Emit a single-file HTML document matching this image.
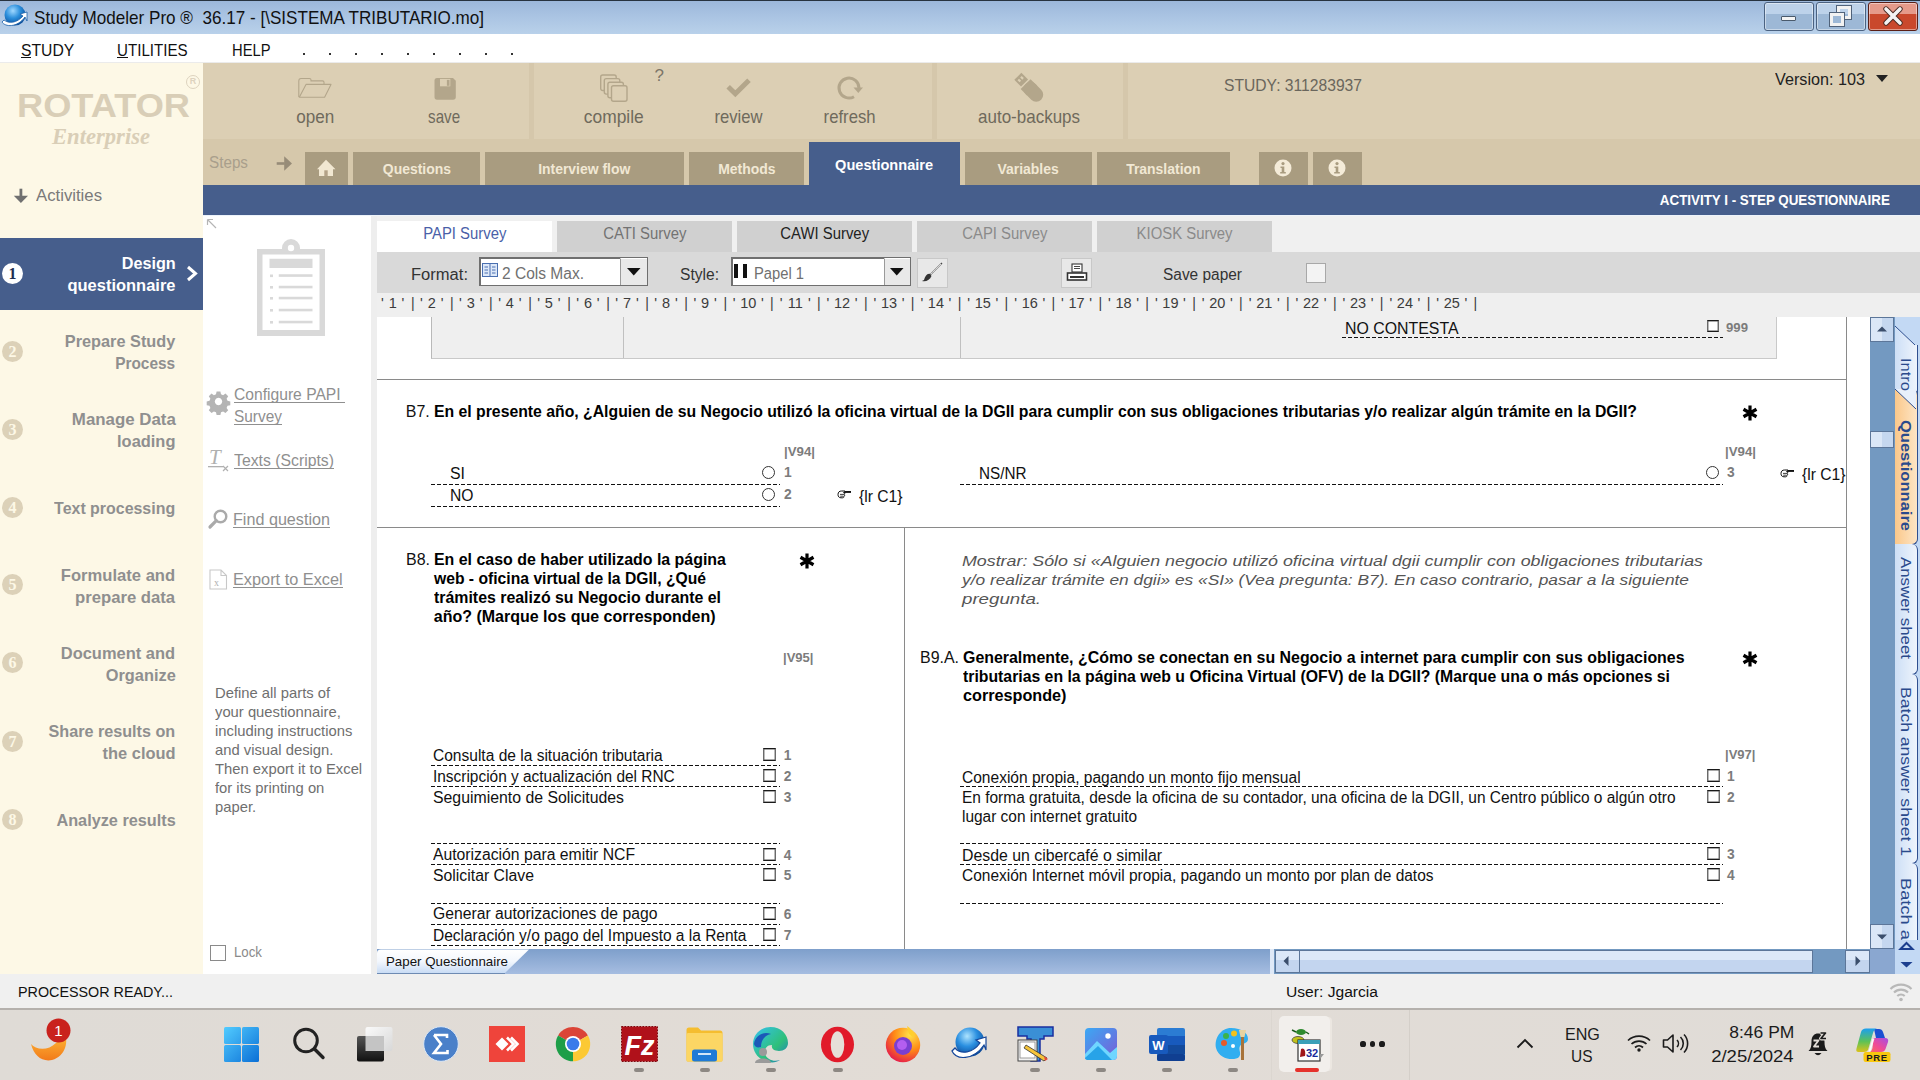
<!DOCTYPE html>
<html><head><meta charset="utf-8"><title>Study Modeler Pro</title><style>
*{margin:0;padding:0;box-sizing:border-box}
html,body{width:1920px;height:1080px;overflow:hidden;background:#f0f0f0;font-family:"Liberation Sans",sans-serif;position:relative}
.a{position:absolute}
.t{position:absolute;white-space:pre;display:block}
svg{position:absolute;overflow:visible}
</style></head><body>
<div class="a " style="left:0px;top:0px;width:1920px;height:34px;background:linear-gradient(#9bb6d9 0%,#a9c3e2 45%,#b9d1ea 100%);"></div>
<div class="a " style="left:0px;top:0px;width:1920px;height:1px;background:#27323e;"></div>
<svg style="left:1px;top:4px" width="27" height="24" viewBox="0 0 27 24">
<defs><radialGradient id="gl" cx="0.4" cy="0.3" r="0.7"><stop offset="0" stop-color="#9fd8ff"/><stop offset="0.5" stop-color="#2b8fdc"/><stop offset="1" stop-color="#0b4f9a"/></radialGradient></defs>
<circle cx="14" cy="11" r="10.5" fill="url(#gl)"/>
<path d="M1 18 C4 23 16 24 24 13 L26 17 L26 8 L19 10 L22 12 C16 19 8 20 3 16 Z" fill="#fff" stroke="#1b5fa8" stroke-width="0.8"/>
</svg>
<span class="t " style="left:34.00px;top:-2px;font-size:18.5px;line-height:40px;color:#111;font-family:'Liberation Sans',sans-serif;transform:scaleX(0.9242);transform-origin:left top;">Study Modeler Pro ®  36.17 - [\SISTEMA TRIBUTARIO.mo]</span>
<div class="a" style="left:1764px;top:2px;width:50px;height:29px;border:1px solid #4b6281;border-radius:3px;background:linear-gradient(#bdd2ea 0%,#bdd2ea 40%,#9db8d6 41%,#9db8d6 100%);box-shadow:inset 0 0 0 1px rgba(255,255,255,.45)"></div>
<div class="a" style="left:1816px;top:2px;width:50px;height:29px;border:1px solid #4b6281;border-radius:3px;background:linear-gradient(#bdd2ea 0%,#bdd2ea 40%,#9db8d6 41%,#9db8d6 100%);box-shadow:inset 0 0 0 1px rgba(255,255,255,.45)"></div>
<div class="a" style="left:1868px;top:2px;width:50px;height:29px;border:1px solid #5a1f16;border-radius:3px;background:linear-gradient(#e59a8a 0%,#e59a8a 40%,#c9482c 41%,#c9482c 100%);box-shadow:inset 0 0 0 1px rgba(255,255,255,.45)"></div>
<div class="a " style="left:1781px;top:16px;width:15px;height:5px;background:#f4f4f4;border:1px solid #4a5a6c;border-radius:1px"></div>
<div class="a" style="left:1837px;top:6px;width:14px;height:13px;border:3px solid #f2f2f2;outline:1px solid #50627a"></div>
<div class="a" style="left:1830px;top:13px;width:14px;height:13px;border:3px solid #f2f2f2;outline:1px solid #50627a;background:#9db8d6"></div>
<svg style="left:1884px;top:8px" width="18" height="16" viewBox="0 0 18 16"><path d="M2 1 L16 15 M16 1 L2 15" stroke="#4a2a22" stroke-width="5.4" stroke-linecap="round"/><path d="M2 1 L16 15 M16 1 L2 15" stroke="#f3f3f3" stroke-width="3.6" stroke-linecap="round"/></svg>
<div class="a " style="left:0px;top:34px;width:1920px;height:29px;background:#fff;"></div>
<div class="a " style="left:0px;top:62px;width:1920px;height:1px;background:#ebebeb;"></div>
<span class="t " style="left:21.00px;top:31px;font-size:16.6px;line-height:40px;color:#111;font-family:'Liberation Sans',sans-serif;transform:scaleX(0.9473);transform-origin:left top;">STUDY</span>
<div class="a " style="left:21px;top:57px;width:10px;height:1px;background:#111;"></div>
<span class="t " style="left:117.40px;top:31px;font-size:16.6px;line-height:40px;color:#111;font-family:'Liberation Sans',sans-serif;transform:scaleX(0.9125);transform-origin:left top;">UTILITIES</span>
<div class="a " style="left:117px;top:57px;width:11px;height:1px;background:#111;"></div>
<span class="t " style="left:231.90px;top:31px;font-size:16.6px;line-height:40px;color:#111;font-family:'Liberation Sans',sans-serif;transform:scaleX(0.8901);transform-origin:left top;">HELP</span>
<div class="a " style="left:303px;top:53px;width:2px;height:2px;background:#333;"></div>
<div class="a " style="left:329px;top:53px;width:2px;height:2px;background:#333;"></div>
<div class="a " style="left:355px;top:53px;width:2px;height:2px;background:#333;"></div>
<div class="a " style="left:381px;top:53px;width:2px;height:2px;background:#333;"></div>
<div class="a " style="left:407px;top:53px;width:2px;height:2px;background:#333;"></div>
<div class="a " style="left:433px;top:53px;width:2px;height:2px;background:#333;"></div>
<div class="a " style="left:459px;top:53px;width:2px;height:2px;background:#333;"></div>
<div class="a " style="left:485px;top:53px;width:2px;height:2px;background:#333;"></div>
<div class="a " style="left:511px;top:53px;width:2px;height:2px;background:#333;"></div>
<div class="a " style="left:0px;top:63px;width:203px;height:911px;background:#fdf8e6;"></div>
<span class="t " style="left:17.00px;top:84px;font-size:33px;line-height:43px;color:#d9ceb7;font-family:'Liberation Sans',sans-serif;font-weight:bold;transform:scaleX(1.0973);transform-origin:left top;">ROTATOR</span>
<div class="a" style="left:186px;top:75px;width:14px;height:14px;border:1.5px solid #ddd3bf;border-radius:50%;color:#ddd3bf;font:bold 9px/11px 'Liberation Sans';text-align:center">R</div>
<span class="t " style="left:52.00px;top:117px;font-size:23px;line-height:40px;color:#d9ceb7;font-family:'Liberation Serif',serif;font-weight:bold;font-style:italic;transform:scaleX(0.9831);transform-origin:left top;">Enterprise</span>
<svg style="left:13px;top:188px" width="16" height="16" viewBox="0 0 16 16"><rect x="6.5" y="0.7" width="2.8" height="9" fill="#707070"/><path d="M0.8 7.8 H15 L7.9 15 Z" fill="#707070"/></svg>
<span class="t " style="left:36.00px;top:176px;font-size:17px;line-height:40px;color:#7a7a7a;font-family:'Liberation Sans',sans-serif;transform:scaleX(0.9840);transform-origin:left top;">Activities</span>
<div class="a " style="left:0px;top:238px;width:203px;height:72px;background:#465e8c;"></div>
<span class="t " style="left:118.82px;top:244px;font-size:17px;line-height:40px;color:#fff;font-family:'Liberation Sans',sans-serif;font-weight:bold;transform:scaleX(0.9527);transform-origin:right top;">Design</span>
<span class="t " style="left:64.03px;top:266px;font-size:17px;line-height:40px;color:#fff;font-family:'Liberation Sans',sans-serif;font-weight:bold;transform:scaleX(0.9689);transform-origin:right top;">questionnaire</span>
<div class="a" style="left:2px;top:262.5px;width:21px;height:21px;border-radius:50%;background:#fff"></div>
<span class="t " style="left:8.50px;top:254px;font-size:16px;line-height:40px;color:#1f2d50;font-family:'Liberation Serif',serif;font-weight:bold;">1</span>
<span class="t " style="left:60.23px;top:322px;font-size:17px;line-height:40px;color:#8f8f8f;font-family:'Liberation Sans',sans-serif;font-weight:bold;transform:scaleX(0.9578);transform-origin:right top;">Prepare Study</span>
<span class="t " style="left:109.34px;top:344px;font-size:17px;line-height:40px;color:#8f8f8f;font-family:'Liberation Sans',sans-serif;font-weight:bold;transform:scaleX(0.9069);transform-origin:right top;">Process</span>
<div class="a" style="left:2px;top:340.5px;width:21px;height:21px;border-radius:50%;background:#dcd1b8"></div>
<span class="t " style="left:8.50px;top:332px;font-size:16px;line-height:40px;color:#fdf8e6;font-family:'Liberation Serif',serif;font-weight:bold;">2</span>
<span class="t " style="left:70.63px;top:400px;font-size:17px;line-height:40px;color:#8f8f8f;font-family:'Liberation Sans',sans-serif;font-weight:bold;transform:scaleX(0.9917);transform-origin:right top;">Manage Data</span>
<span class="t " style="left:115.06px;top:422px;font-size:17px;line-height:40px;color:#8f8f8f;font-family:'Liberation Sans',sans-serif;font-weight:bold;transform:scaleX(0.9663);transform-origin:right top;">loading</span>
<div class="a" style="left:2px;top:418.5px;width:21px;height:21px;border-radius:50%;background:#dcd1b8"></div>
<span class="t " style="left:8.50px;top:410px;font-size:16px;line-height:40px;color:#fdf8e6;font-family:'Liberation Serif',serif;font-weight:bold;">3</span>
<span class="t " style="left:46.39px;top:489px;font-size:17px;line-height:40px;color:#8f8f8f;font-family:'Liberation Sans',sans-serif;font-weight:bold;transform:scaleX(0.9372);transform-origin:right top;">Text processing</span>
<div class="a" style="left:2px;top:496.5px;width:21px;height:21px;border-radius:50%;background:#dcd1b8"></div>
<span class="t " style="left:8.50px;top:488px;font-size:16px;line-height:40px;color:#fdf8e6;font-family:'Liberation Serif',serif;font-weight:bold;">4</span>
<span class="t " style="left:58.37px;top:556px;font-size:17px;line-height:40px;color:#8f8f8f;font-family:'Liberation Sans',sans-serif;font-weight:bold;transform:scaleX(0.9759);transform-origin:right top;">Formulate and</span>
<span class="t " style="left:73.46px;top:578px;font-size:17px;line-height:40px;color:#8f8f8f;font-family:'Liberation Sans',sans-serif;font-weight:bold;transform:scaleX(0.9800);transform-origin:right top;">prepare data</span>
<div class="a" style="left:2px;top:573.5px;width:21px;height:21px;border-radius:50%;background:#dcd1b8"></div>
<span class="t " style="left:8.50px;top:565px;font-size:16px;line-height:40px;color:#fdf8e6;font-family:'Liberation Serif',serif;font-weight:bold;">5</span>
<span class="t " style="left:57.44px;top:634px;font-size:17px;line-height:40px;color:#8f8f8f;font-family:'Liberation Sans',sans-serif;font-weight:bold;transform:scaleX(0.9681);transform-origin:right top;">Document and</span>
<span class="t " style="left:102.76px;top:656px;font-size:17px;line-height:40px;color:#8f8f8f;font-family:'Liberation Sans',sans-serif;font-weight:bold;transform:scaleX(0.9623);transform-origin:right top;">Organize</span>
<div class="a" style="left:2px;top:651.5px;width:21px;height:21px;border-radius:50%;background:#dcd1b8"></div>
<span class="t " style="left:8.50px;top:643px;font-size:16px;line-height:40px;color:#fdf8e6;font-family:'Liberation Serif',serif;font-weight:bold;">6</span>
<span class="t " style="left:42.29px;top:712px;font-size:17px;line-height:40px;color:#8f8f8f;font-family:'Liberation Sans',sans-serif;font-weight:bold;transform:scaleX(0.9511);transform-origin:right top;">Share results on</span>
<span class="t " style="left:99.94px;top:734px;font-size:17px;line-height:40px;color:#8f8f8f;font-family:'Liberation Sans',sans-serif;font-weight:bold;transform:scaleX(0.9662);transform-origin:right top;">the cloud</span>
<div class="a" style="left:2px;top:730.5px;width:21px;height:21px;border-radius:50%;background:#dcd1b8"></div>
<span class="t " style="left:8.50px;top:722px;font-size:16px;line-height:40px;color:#fdf8e6;font-family:'Liberation Serif',serif;font-weight:bold;">7</span>
<span class="t " style="left:50.78px;top:801px;font-size:17px;line-height:40px;color:#8f8f8f;font-family:'Liberation Sans',sans-serif;font-weight:bold;transform:scaleX(0.9565);transform-origin:right top;">Analyze results</span>
<div class="a" style="left:2px;top:808.5px;width:21px;height:21px;border-radius:50%;background:#dcd1b8"></div>
<span class="t " style="left:8.50px;top:800px;font-size:16px;line-height:40px;color:#fdf8e6;font-family:'Liberation Serif',serif;font-weight:bold;">8</span>
<svg style="left:186px;top:265px" width="12" height="17" viewBox="0 0 12 17"><path d="M2 2 L9.5 8.5 L2 15" stroke="#fff" stroke-width="3" fill="none"/></svg>
<div class="a " style="left:203px;top:63px;width:1717px;height:76px;background:#dccfb4;"></div>
<div class="a " style="left:529px;top:63px;width:5px;height:76px;background:#d5c7ab;"></div>
<div class="a " style="left:932px;top:63px;width:5px;height:76px;background:#d5c7ab;"></div>
<div class="a " style="left:1123px;top:63px;width:5px;height:76px;background:#d5c7ab;"></div>
<div class="a " style="left:203px;top:139px;width:1717px;height:46px;background:#d6c8ab;"></div>
<span class="t " style="left:293.87px;top:97px;font-size:19px;line-height:40px;color:#6f6a5c;font-family:'Liberation Sans',sans-serif;transform:scaleX(0.8990);transform-origin:center top;">open</span>
<span class="t " style="left:423.93px;top:97px;font-size:19px;line-height:40px;color:#6f6a5c;font-family:'Liberation Sans',sans-serif;transform:scaleX(0.7973);transform-origin:center top;">save</span>
<span class="t " style="left:581.26px;top:97px;font-size:19px;line-height:40px;color:#6f6a5c;font-family:'Liberation Sans',sans-serif;transform:scaleX(0.9164);transform-origin:center top;">compile</span>
<span class="t " style="left:710.55px;top:97px;font-size:19px;line-height:40px;color:#6f6a5c;font-family:'Liberation Sans',sans-serif;transform:scaleX(0.8742);transform-origin:center top;">review</span>
<span class="t " style="left:820.43px;top:97px;font-size:19px;line-height:40px;color:#6f6a5c;font-family:'Liberation Sans',sans-serif;transform:scaleX(0.8793);transform-origin:center top;">refresh</span>
<span class="t " style="left:971.96px;top:97px;font-size:19px;line-height:40px;color:#6f6a5c;font-family:'Liberation Sans',sans-serif;transform:scaleX(0.8941);transform-origin:center top;">auto-backups</span>
<span class="t " style="left:1224.00px;top:66px;font-size:17px;line-height:40px;color:#6a665c;font-family:'Liberation Sans',sans-serif;transform:scaleX(0.9203);transform-origin:left top;">STUDY: 311283937</span>
<span class="t " style="left:1775.00px;top:60px;font-size:17px;line-height:40px;color:#222;font-family:'Liberation Sans',sans-serif;transform:scaleX(0.9522);transform-origin:left top;">Version: 103</span>
<svg style="left:1876px;top:75px" width="13" height="8" viewBox="0 0 13 8"><path d="M0 0 H12 L6 7 Z" fill="#222"/></svg>
<svg style="left:297px;top:77px" width="36" height="22" viewBox="0 0 36 22"><path d="M1.8 20 V4 Q1.8 1.5 4 1.5 H12.5 Q14 1.5 14 3 V3.9 H25.5 Q27 3.9 27 5.2 V7" fill="none" stroke="#b3a68b" stroke-width="1.1"/><path d="M2.3 20.3 L9 7.4 H34 L27.6 20.3 Z" fill="none" stroke="#b3a68b" stroke-width="1.1" stroke-linejoin="round"/></svg>
<svg style="left:434px;top:77px" width="23" height="24" viewBox="0 0 23 24"><path d="M3 1 H19 L21.8 3.8 V20 Q21.8 22.8 19 22.8 H3 Q0.5 22.8 0.5 20 V3.5 Q0.5 1 3 1 Z" fill="#b3a68b"/><rect x="6" y="1.9" width="10.3" height="7.4" fill="#dccfb4"/><rect x="12.9" y="2.9" width="2.6" height="5.9" fill="#b3a68b"/></svg>
<svg style="left:599px;top:73px" width="31" height="31" viewBox="0 0 31 31"><rect x="1.7" y="2" width="15.5" height="15.5" rx="2" fill="#dccfb4" stroke="#b3a68b" stroke-width="1.4"/><rect x="5.3" y="5.6" width="15.5" height="15.5" rx="2" fill="#dccfb4" stroke="#b3a68b" stroke-width="1.4"/><rect x="8.9" y="9.2" width="15.5" height="15.5" rx="2" fill="#dccfb4" stroke="#b3a68b" stroke-width="1.4"/><rect x="12.5" y="12.8" width="15.5" height="15.5" rx="2" fill="#dccfb4" stroke="#b3a68b" stroke-width="1.4"/></svg>
<span class="t " style="left:654.57px;top:56px;font-size:17px;line-height:40px;color:#7c7668;font-family:'Liberation Sans',sans-serif;">?</span>
<svg style="left:726px;top:77px" width="27" height="21" viewBox="0 0 27 21"><path d="M2.2 9.8 L9.3 16.8 L23 3.2" fill="none" stroke="#b3a68b" stroke-width="5"/></svg>
<svg style="left:837px;top:75px" width="28" height="26" viewBox="0 0 28 26"><path d="M17 21.7 A10 10 0 1 1 22 13" fill="none" stroke="#b3a68b" stroke-width="3"/><path d="M16.5 12.5 H26 L21.3 18 Z" fill="#b3a68b"/></svg>
<svg style="left:1010px;top:70px" width="40" height="40" viewBox="0 0 40 40"><g transform="translate(19.5 18) rotate(-45) translate(-7 -16.5)"><rect x="0" y="11" width="14" height="22" rx="7" fill="#b3a68b"/><rect x="0" y="11" width="14" height="9" fill="#b3a68b"/><rect x="2" y="0" width="10" height="9.5" fill="#b3a68b"/><rect x="4" y="2.5" width="2.2" height="3" fill="#dccfb4"/><rect x="7.8" y="2.5" width="2.2" height="3" fill="#dccfb4"/></g></svg>
<span class="t " style="left:209.00px;top:143px;font-size:16px;line-height:40px;color:#a99f8c;font-family:'Liberation Sans',sans-serif;transform:scaleX(0.9532);transform-origin:left top;">Steps</span>
<svg style="left:276px;top:155px" width="17" height="17" viewBox="0 0 17 17"><rect x="0.7" y="7.2" width="8" height="2.6" fill="#978c78"/><path d="M8.2 1.2 L16 8.5 L8.2 15.8 Z" fill="#978c78"/></svg>
<div class="a " style="left:305px;top:152px;width:43px;height:33px;background:#a99c80;"></div>
<div class="a " style="left:353px;top:152px;width:127px;height:33px;background:#a99c80;"></div>
<span class="t " style="left:378.60px;top:149px;font-size:15.5px;line-height:40px;color:#f1e8d4;font-family:'Liberation Sans',sans-serif;font-weight:bold;transform:scaleX(0.9000);transform-origin:center top;">Questions</span>
<div class="a " style="left:485px;top:152px;width:199px;height:33px;background:#a99c80;"></div>
<span class="t " style="left:533.25px;top:149px;font-size:15.5px;line-height:40px;color:#f1e8d4;font-family:'Liberation Sans',sans-serif;font-weight:bold;transform:scaleX(0.9000);transform-origin:center top;">Interview flow</span>
<div class="a " style="left:689px;top:152px;width:115px;height:33px;background:#a99c80;"></div>
<span class="t " style="left:714.64px;top:149px;font-size:15.5px;line-height:40px;color:#f1e8d4;font-family:'Liberation Sans',sans-serif;font-weight:bold;transform:scaleX(0.9000);transform-origin:center top;">Methods</span>
<div class="a " style="left:965px;top:152px;width:127px;height:33px;background:#a99c80;"></div>
<span class="t " style="left:994.46px;top:149px;font-size:15.5px;line-height:40px;color:#f1e8d4;font-family:'Liberation Sans',sans-serif;font-weight:bold;transform:scaleX(0.9000);transform-origin:center top;">Variables</span>
<div class="a " style="left:1097px;top:152px;width:133px;height:33px;background:#a99c80;"></div>
<span class="t " style="left:1122.16px;top:149px;font-size:15.5px;line-height:40px;color:#f1e8d4;font-family:'Liberation Sans',sans-serif;font-weight:bold;transform:scaleX(0.9000);transform-origin:center top;">Translation</span>
<div class="a " style="left:1259px;top:152px;width:49px;height:33px;background:#a99c80;"></div>
<div class="a " style="left:1313px;top:152px;width:49px;height:33px;background:#a99c80;"></div>
<svg style="left:316px;top:159px" width="21" height="18" viewBox="0 0 21 18"><path d="M1 10.2 L10 0.8 L19.5 10.2 H17 V17 H3 V10.2 Z" fill="#f1e7d1"/><rect x="8.3" y="11.3" width="3.4" height="5.7" fill="#b3a187"/></svg>
<svg style="left:1274px;top:159px" width="18" height="18" viewBox="0 0 18 18"><circle cx="9" cy="9" r="8.5" fill="#f4ebd8"/><circle cx="9" cy="4.6" r="1.6" fill="#a99c80"/><path d="M6.5 7.5 H10.3 V13 H11.8 V14.6 H6.2 V13 H7.7 V9 H6.5 Z" fill="#a99c80"/></svg>
<svg style="left:1328px;top:159px" width="18" height="18" viewBox="0 0 18 18"><circle cx="9" cy="9" r="8.5" fill="#f4ebd8"/><circle cx="9" cy="4.6" r="1.6" fill="#a99c80"/><path d="M6.5 7.5 H10.3 V13 H11.8 V14.6 H6.2 V13 H7.7 V9 H6.5 Z" fill="#a99c80"/></svg>
<div class="a " style="left:809px;top:142px;width:151px;height:43px;background:#465e8c;"></div>
<span class="t " style="left:832.39px;top:145px;font-size:15.5px;line-height:40px;color:#fff;font-family:'Liberation Sans',sans-serif;font-weight:bold;transform:scaleX(0.9403);transform-origin:center top;">Questionnaire</span>
<div class="a " style="left:203px;top:185px;width:1717px;height:30px;background:#465e8c;"></div>
<span class="t " style="left:1632.18px;top:180px;font-size:15px;line-height:40px;color:#fff;font-family:'Liberation Sans',sans-serif;font-weight:bold;transform:scaleX(0.8921);transform-origin:right top;">ACTIVITY I - STEP QUESTIONNAIRE</span>
<div class="a " style="left:203px;top:215px;width:169px;height:759px;background:#fff;"></div>
<svg style="left:206px;top:218px" width="12" height="12" viewBox="0 0 12 12"><path d="M1.5 1.5 L10 10 M1.5 1.5 H7 M1.5 1.5 V7" stroke="#b5b5b5" stroke-width="1.2" fill="none"/></svg>
<svg style="left:257px;top:240px" width="69" height="96" viewBox="0 0 69 96">
<path d="M0 9 H25 V8 A9 9 0 0 1 43 8 V9 H68 V96 H0 Z M5.5 14.5 V90 H62.5 V14.5 Z" fill="#d9d9d9" fill-rule="evenodd"/>
<rect x="12.5" y="18.75" width="43" height="9.25" fill="#d9d9d9"/>
<circle cx="34" cy="8" r="3.2" fill="#fff"/>
<rect x="13" y="34.5" width="3" height="2.6" fill="#d9d9d9"/><rect x="21.75" y="34.25" width="33.75" height="2.6" fill="#d9d9d9"/><rect x="13" y="46" width="3" height="2.6" fill="#d9d9d9"/><rect x="21.75" y="45.75" width="33.75" height="2.6" fill="#d9d9d9"/><rect x="13" y="57" width="3" height="2.6" fill="#d9d9d9"/><rect x="21.75" y="56.75" width="33.75" height="2.6" fill="#d9d9d9"/><rect x="13" y="69" width="3" height="2.6" fill="#d9d9d9"/><rect x="21.75" y="68.75" width="33.75" height="2.6" fill="#d9d9d9"/><rect x="13" y="81" width="3" height="2.6" fill="#d9d9d9"/><rect x="21.75" y="80.75" width="33.75" height="2.6" fill="#d9d9d9"/></svg>
<svg style="left:208px;top:391px" width="21" height="21" viewBox="0 0 21 21"><path fill="#b4b4b4" fill-rule="evenodd" d="M8.6 0.5h3.8l0.6 2.8 2.1 0.9 2.4-1.6 2.7 2.7-1.6 2.4 0.9 2.1 2.8 0.6v3.8l-2.8 0.6-0.9 2.1 1.6 2.4-2.7 2.7-2.4-1.6-2.1 0.9-0.6 2.8h-3.8l-0.6-2.8-2.1-0.9-2.4 1.6-2.7-2.7 1.6-2.4-0.9-2.1-2.8-0.6v-3.8l2.8-0.6 0.9-2.1-1.6-2.4 2.7-2.7 2.4 1.6 2.1-0.9z M10.5 6.8a3.7 3.7 0 1 0 0.01 0z"/></svg>
<span class="t " style="left:233.75px;top:374px;font-size:16.4px;line-height:40px;color:#8f8f8f;font-family:'Liberation Sans',sans-serif;transform:scaleX(0.9538);transform-origin:left top;">Configure PAPI </span><div class="a " style="left:233.75px;top:402px;width:111px;height:1px;background:#8f8f8f;"></div>
<span class="t " style="left:233.75px;top:396px;font-size:16.4px;line-height:40px;color:#8f8f8f;font-family:'Liberation Sans',sans-serif;transform:scaleX(0.9404);transform-origin:left top;">Survey</span><div class="a " style="left:233.75px;top:424px;width:48px;height:1px;background:#8f8f8f;"></div>
<span class="t " style="left:233.75px;top:440px;font-size:16.4px;line-height:40px;color:#8f8f8f;font-family:'Liberation Sans',sans-serif;transform:scaleX(0.9627);transform-origin:left top;">Texts (Scripts)</span><div class="a " style="left:233.75px;top:467.75px;width:100px;height:1px;background:#8f8f8f;"></div>
<span class="t " style="left:233.00px;top:499px;font-size:16.4px;line-height:40px;color:#8f8f8f;font-family:'Liberation Sans',sans-serif;transform:scaleX(0.9851);transform-origin:left top;">Find question</span><div class="a " style="left:233px;top:527.1px;width:97px;height:1px;background:#8f8f8f;"></div>
<span class="t " style="left:233.00px;top:559px;font-size:16.4px;line-height:40px;color:#8f8f8f;font-family:'Liberation Sans',sans-serif;transform:scaleX(0.9946);transform-origin:left top;">Export to Excel</span><div class="a " style="left:233px;top:587.4px;width:109.7px;height:1px;background:#8f8f8f;"></div>
<svg style="left:208px;top:448px" width="22" height="24" viewBox="0 0 22 24"><text x="1" y="16" font-family="Liberation Serif" font-style="italic" font-size="21" fill="#b0b0b0">T</text><rect x="0" y="18" width="15" height="1.3" fill="#b0b0b0"/><path d="M15 18 L20 23 M20 18 L15 23" stroke="#b0b0b0" stroke-width="1.2"/></svg>
<svg style="left:208px;top:509px" width="21" height="20" viewBox="0 0 21 20"><circle cx="12.5" cy="7.5" r="5.8" fill="none" stroke="#aaa" stroke-width="2.4"/><path d="M8.3 11.7 L2 18" stroke="#aaa" stroke-width="3.2" stroke-linecap="round"/></svg>
<svg style="left:209px;top:569px" width="19" height="21" viewBox="0 0 19 21"><path d="M1 1 H12 L17.5 6.5 V20 H1 Z M12 1 V6.5 H17.5" fill="none" stroke="#c8c8c8" stroke-width="1.1"/><text x="5" y="17" font-family="Liberation Serif" font-size="10" fill="#b0b0b0">x</text></svg>
<span class="t " style="left:215.30px;top:673px;font-size:14.5px;line-height:40px;color:#6f6f6f;font-family:'Liberation Sans',sans-serif;transform:scaleX(1.0200);transform-origin:left top;">Define all parts of</span>
<span class="t " style="left:215.30px;top:692px;font-size:14.5px;line-height:40px;color:#6f6f6f;font-family:'Liberation Sans',sans-serif;transform:scaleX(1.0200);transform-origin:left top;">your questionnaire,</span>
<span class="t " style="left:215.30px;top:711px;font-size:14.5px;line-height:40px;color:#6f6f6f;font-family:'Liberation Sans',sans-serif;transform:scaleX(1.0200);transform-origin:left top;">including instructions</span>
<span class="t " style="left:215.30px;top:730px;font-size:14.5px;line-height:40px;color:#6f6f6f;font-family:'Liberation Sans',sans-serif;transform:scaleX(1.0200);transform-origin:left top;">and visual design.</span>
<span class="t " style="left:215.30px;top:749px;font-size:14.5px;line-height:40px;color:#6f6f6f;font-family:'Liberation Sans',sans-serif;transform:scaleX(1.0200);transform-origin:left top;">Then export it to Excel</span>
<span class="t " style="left:215.30px;top:768px;font-size:14.5px;line-height:40px;color:#6f6f6f;font-family:'Liberation Sans',sans-serif;transform:scaleX(1.0200);transform-origin:left top;">for its printing on</span>
<span class="t " style="left:215.30px;top:787px;font-size:14.5px;line-height:40px;color:#6f6f6f;font-family:'Liberation Sans',sans-serif;transform:scaleX(1.0200);transform-origin:left top;">paper.</span>
<div class="a " style="left:210px;top:945px;width:16px;height:16px;background:#fff;border:1px solid #8a8a8a"></div>
<span class="t " style="left:234.00px;top:932px;font-size:14.5px;line-height:40px;color:#8a8a8a;font-family:'Liberation Sans',sans-serif;transform:scaleX(0.9142);transform-origin:left top;">Lock</span>
<div class="a " style="left:371px;top:215px;width:1549px;height:759px;background:#f0f0f0;"></div>
<div class="a " style="left:371px;top:215px;width:6px;height:759px;background:#eeeeee;"></div>
<div class="a " style="left:203px;top:215px;width:1717px;height:1px;background:#edf3fb;"></div>
<div class="a " style="left:377px;top:221px;width:175px;height:31px;background:#fff;"></div>
<span class="t " style="left:419.74px;top:214px;font-size:16px;line-height:40px;color:#4a5fa8;font-family:'Liberation Sans',sans-serif;transform:scaleX(0.9300);transform-origin:center top;">PAPI Survey</span>
<div class="a " style="left:557px;top:221px;width:175px;height:31px;background:#d0d0d0;"></div>
<span class="t " style="left:599.75px;top:214px;font-size:16px;line-height:40px;color:#737373;font-family:'Liberation Sans',sans-serif;transform:scaleX(0.9300);transform-origin:center top;">CATI Survey</span>
<div class="a " style="left:737px;top:221px;width:175px;height:31px;background:#d0d0d0;"></div>
<span class="t " style="left:776.79px;top:214px;font-size:16px;line-height:40px;color:#222;font-family:'Liberation Sans',sans-serif;transform:scaleX(0.9300);transform-origin:center top;">CAWI Survey</span>
<div class="a " style="left:917px;top:221px;width:175px;height:31px;background:#d0d0d0;"></div>
<span class="t " style="left:958.71px;top:214px;font-size:16px;line-height:40px;color:#8a8a8a;font-family:'Liberation Sans',sans-serif;transform:scaleX(0.9300);transform-origin:center top;">CAPI Survey</span>
<div class="a " style="left:1097px;top:221px;width:175px;height:31px;background:#d0d0d0;"></div>
<span class="t " style="left:1132.92px;top:214px;font-size:16px;line-height:40px;color:#8a8a8a;font-family:'Liberation Sans',sans-serif;transform:scaleX(0.9300);transform-origin:center top;">KIOSK Survey</span>
<div class="a " style="left:377px;top:252px;width:1543px;height:41px;background:#d9d9d9;"></div>
<span class="t " style="left:410.50px;top:255px;font-size:16px;line-height:40px;color:#333;font-family:'Liberation Sans',sans-serif;transform:scaleX(1.0341);transform-origin:left top;">Format:</span>
<div class="a " style="left:479px;top:257px;width:169px;height:29px;background:#fff;border:2px solid #6f6f6f;border-right-width:1px;border-bottom-width:1px"></div>
<div class="a " style="left:620px;top:258px;width:27px;height:27px;background:#e9e9e9;border-left:1px solid #9a9a9a;border-top:1px solid #fff"></div>
<svg style="left:627px;top:268px" width="14" height="8" viewBox="0 0 14 8"><path d="M0 0 H13.5 L6.75 7.5 Z" fill="#111"/></svg>
<svg style="left:482px;top:263px" width="17" height="16" viewBox="0 0 17 16"><rect x="0.5" y="0.5" width="15" height="13" fill="#dde8f8" stroke="#4a6fb0"/><path d="M8 1 V13 M2.5 4 H6 M2.5 7 H6 M2.5 10 H6 M10 4 H13.5 M10 7 H13.5 M10 10 H13.5" stroke="#4a6fb0" stroke-width="1"/></svg>
<span class="t " style="left:502.00px;top:254px;font-size:16px;line-height:40px;color:#707070;font-family:'Liberation Sans',sans-serif;transform:scaleX(0.9708);transform-origin:left top;">2 Cols Max.</span>
<span class="t " style="left:680.00px;top:255px;font-size:16px;line-height:40px;color:#333;font-family:'Liberation Sans',sans-serif;transform:scaleX(0.9746);transform-origin:left top;">Style:</span>
<div class="a " style="left:731px;top:257px;width:180px;height:29px;background:#fff;border:2px solid #6f6f6f;border-right-width:1px;border-bottom-width:1px"></div>
<div class="a " style="left:884px;top:258px;width:26px;height:27px;background:#e9e9e9;border-left:1px solid #9a9a9a;border-top:1px solid #fff"></div>
<svg style="left:890px;top:268px" width="14" height="8" viewBox="0 0 14 8"><path d="M0 0 H13.5 L6.75 7.5 Z" fill="#111"/></svg>
<div class="a " style="left:734px;top:264px;width:4px;height:14px;background:#111;"></div>
<div class="a " style="left:743px;top:264px;width:4px;height:14px;background:#111;"></div>
<span class="t " style="left:754.00px;top:254px;font-size:16px;line-height:40px;color:#707070;font-family:'Liberation Sans',sans-serif;transform:scaleX(0.9214);transform-origin:left top;">Papel 1</span>
<div class="a " style="left:917px;top:258px;width:31px;height:30px;background:#e8e8e8;border:1px solid #c8c8c8"></div>
<svg style="left:920px;top:261px" width="24" height="24" viewBox="0 0 24 24"><path d="M22 2 L10 14" stroke="#444" stroke-width="1.2"/><path d="M21 3 C17 7 13 11 10.5 13.5" stroke="#fff" stroke-width="0.8"/><path d="M10 13 C7 12 5 16 4 19 L2 20 C6 21 10 19 11.5 15 Z" fill="#333"/></svg>
<div class="a " style="left:1061px;top:258px;width:31px;height:30px;background:#e8e8e8;border:1px solid #c8c8c8"></div>
<svg style="left:1066px;top:263px" width="22" height="21" viewBox="0 0 22 21"><rect x="6" y="1" width="10" height="8" fill="#fff" stroke="#333" stroke-width="1.1"/><path d="M8 3.5 H14 M8 5.5 H14" stroke="#333" stroke-width="0.9"/><rect x="1.5" y="10" width="19" height="7" fill="#fff" stroke="#333" stroke-width="1.6"/><rect x="4" y="13" width="14" height="2" fill="#333"/></svg>
<span class="t " style="left:1163.00px;top:255px;font-size:16px;line-height:40px;color:#333;font-family:'Liberation Sans',sans-serif;transform:scaleX(0.9653);transform-origin:left top;">Save paper</span>
<div class="a " style="left:1306px;top:263px;width:20px;height:20px;background:#f3f3f3;border:1px solid #a8a8a8"></div>
<div class="a " style="left:377px;top:293px;width:1543px;height:24px;background:#efefef;"></div>
<span class="t " style="left:388.67px;top:283px;font-size:14.5px;line-height:40px;color:#3c3c3c;font-family:'Liberation Sans',sans-serif;">1</span>
<span class="t " style="left:381.02px;top:283px;font-size:14.5px;line-height:40px;color:#3c3c3c;font-family:'Liberation Sans',sans-serif;">'</span>
<span class="t " style="left:401.62px;top:283px;font-size:14.5px;line-height:40px;color:#3c3c3c;font-family:'Liberation Sans',sans-serif;">'</span>
<span class="t " style="left:410.98px;top:283px;font-size:14px;line-height:40px;color:#3c3c3c;font-family:'Liberation Sans',sans-serif;">|</span>
<span class="t " style="left:427.72px;top:283px;font-size:14.5px;line-height:40px;color:#3c3c3c;font-family:'Liberation Sans',sans-serif;">2</span>
<span class="t " style="left:420.07px;top:283px;font-size:14.5px;line-height:40px;color:#3c3c3c;font-family:'Liberation Sans',sans-serif;">'</span>
<span class="t " style="left:440.67px;top:283px;font-size:14.5px;line-height:40px;color:#3c3c3c;font-family:'Liberation Sans',sans-serif;">'</span>
<span class="t " style="left:450.03px;top:283px;font-size:14px;line-height:40px;color:#3c3c3c;font-family:'Liberation Sans',sans-serif;">|</span>
<span class="t " style="left:466.77px;top:283px;font-size:14.5px;line-height:40px;color:#3c3c3c;font-family:'Liberation Sans',sans-serif;">3</span>
<span class="t " style="left:459.12px;top:283px;font-size:14.5px;line-height:40px;color:#3c3c3c;font-family:'Liberation Sans',sans-serif;">'</span>
<span class="t " style="left:479.72px;top:283px;font-size:14.5px;line-height:40px;color:#3c3c3c;font-family:'Liberation Sans',sans-serif;">'</span>
<span class="t " style="left:489.08px;top:283px;font-size:14px;line-height:40px;color:#3c3c3c;font-family:'Liberation Sans',sans-serif;">|</span>
<span class="t " style="left:505.82px;top:283px;font-size:14.5px;line-height:40px;color:#3c3c3c;font-family:'Liberation Sans',sans-serif;">4</span>
<span class="t " style="left:498.17px;top:283px;font-size:14.5px;line-height:40px;color:#3c3c3c;font-family:'Liberation Sans',sans-serif;">'</span>
<span class="t " style="left:518.77px;top:283px;font-size:14.5px;line-height:40px;color:#3c3c3c;font-family:'Liberation Sans',sans-serif;">'</span>
<span class="t " style="left:528.13px;top:283px;font-size:14px;line-height:40px;color:#3c3c3c;font-family:'Liberation Sans',sans-serif;">|</span>
<span class="t " style="left:544.87px;top:283px;font-size:14.5px;line-height:40px;color:#3c3c3c;font-family:'Liberation Sans',sans-serif;">5</span>
<span class="t " style="left:537.22px;top:283px;font-size:14.5px;line-height:40px;color:#3c3c3c;font-family:'Liberation Sans',sans-serif;">'</span>
<span class="t " style="left:557.82px;top:283px;font-size:14.5px;line-height:40px;color:#3c3c3c;font-family:'Liberation Sans',sans-serif;">'</span>
<span class="t " style="left:567.18px;top:283px;font-size:14px;line-height:40px;color:#3c3c3c;font-family:'Liberation Sans',sans-serif;">|</span>
<span class="t " style="left:583.92px;top:283px;font-size:14.5px;line-height:40px;color:#3c3c3c;font-family:'Liberation Sans',sans-serif;">6</span>
<span class="t " style="left:576.27px;top:283px;font-size:14.5px;line-height:40px;color:#3c3c3c;font-family:'Liberation Sans',sans-serif;">'</span>
<span class="t " style="left:596.87px;top:283px;font-size:14.5px;line-height:40px;color:#3c3c3c;font-family:'Liberation Sans',sans-serif;">'</span>
<span class="t " style="left:606.23px;top:283px;font-size:14px;line-height:40px;color:#3c3c3c;font-family:'Liberation Sans',sans-serif;">|</span>
<span class="t " style="left:622.97px;top:283px;font-size:14.5px;line-height:40px;color:#3c3c3c;font-family:'Liberation Sans',sans-serif;">7</span>
<span class="t " style="left:615.32px;top:283px;font-size:14.5px;line-height:40px;color:#3c3c3c;font-family:'Liberation Sans',sans-serif;">'</span>
<span class="t " style="left:635.92px;top:283px;font-size:14.5px;line-height:40px;color:#3c3c3c;font-family:'Liberation Sans',sans-serif;">'</span>
<span class="t " style="left:645.28px;top:283px;font-size:14px;line-height:40px;color:#3c3c3c;font-family:'Liberation Sans',sans-serif;">|</span>
<span class="t " style="left:662.02px;top:283px;font-size:14.5px;line-height:40px;color:#3c3c3c;font-family:'Liberation Sans',sans-serif;">8</span>
<span class="t " style="left:654.37px;top:283px;font-size:14.5px;line-height:40px;color:#3c3c3c;font-family:'Liberation Sans',sans-serif;">'</span>
<span class="t " style="left:674.97px;top:283px;font-size:14.5px;line-height:40px;color:#3c3c3c;font-family:'Liberation Sans',sans-serif;">'</span>
<span class="t " style="left:684.33px;top:283px;font-size:14px;line-height:40px;color:#3c3c3c;font-family:'Liberation Sans',sans-serif;">|</span>
<span class="t " style="left:701.07px;top:283px;font-size:14.5px;line-height:40px;color:#3c3c3c;font-family:'Liberation Sans',sans-serif;">9</span>
<span class="t " style="left:693.42px;top:283px;font-size:14.5px;line-height:40px;color:#3c3c3c;font-family:'Liberation Sans',sans-serif;">'</span>
<span class="t " style="left:714.02px;top:283px;font-size:14.5px;line-height:40px;color:#3c3c3c;font-family:'Liberation Sans',sans-serif;">'</span>
<span class="t " style="left:723.38px;top:283px;font-size:14px;line-height:40px;color:#3c3c3c;font-family:'Liberation Sans',sans-serif;">|</span>
<span class="t " style="left:740.24px;top:283px;font-size:14.5px;line-height:40px;color:#3c3c3c;font-family:'Liberation Sans',sans-serif;">10</span>
<span class="t " style="left:732.82px;top:283px;font-size:14.5px;line-height:40px;color:#3c3c3c;font-family:'Liberation Sans',sans-serif;">'</span>
<span class="t " style="left:761.02px;top:283px;font-size:14.5px;line-height:40px;color:#3c3c3c;font-family:'Liberation Sans',sans-serif;">'</span>
<span class="t " style="left:770.08px;top:283px;font-size:14px;line-height:40px;color:#3c3c3c;font-family:'Liberation Sans',sans-serif;">|</span>
<span class="t " style="left:787.67px;top:283px;font-size:14.5px;line-height:40px;color:#3c3c3c;font-family:'Liberation Sans',sans-serif;">11</span>
<span class="t " style="left:779.72px;top:283px;font-size:14.5px;line-height:40px;color:#3c3c3c;font-family:'Liberation Sans',sans-serif;">'</span>
<span class="t " style="left:807.92px;top:283px;font-size:14.5px;line-height:40px;color:#3c3c3c;font-family:'Liberation Sans',sans-serif;">'</span>
<span class="t " style="left:816.98px;top:283px;font-size:14px;line-height:40px;color:#3c3c3c;font-family:'Liberation Sans',sans-serif;">|</span>
<span class="t " style="left:834.04px;top:283px;font-size:14.5px;line-height:40px;color:#3c3c3c;font-family:'Liberation Sans',sans-serif;">12</span>
<span class="t " style="left:826.62px;top:283px;font-size:14.5px;line-height:40px;color:#3c3c3c;font-family:'Liberation Sans',sans-serif;">'</span>
<span class="t " style="left:854.82px;top:283px;font-size:14.5px;line-height:40px;color:#3c3c3c;font-family:'Liberation Sans',sans-serif;">'</span>
<span class="t " style="left:863.88px;top:283px;font-size:14px;line-height:40px;color:#3c3c3c;font-family:'Liberation Sans',sans-serif;">|</span>
<span class="t " style="left:880.94px;top:283px;font-size:14.5px;line-height:40px;color:#3c3c3c;font-family:'Liberation Sans',sans-serif;">13</span>
<span class="t " style="left:873.52px;top:283px;font-size:14.5px;line-height:40px;color:#3c3c3c;font-family:'Liberation Sans',sans-serif;">'</span>
<span class="t " style="left:901.72px;top:283px;font-size:14.5px;line-height:40px;color:#3c3c3c;font-family:'Liberation Sans',sans-serif;">'</span>
<span class="t " style="left:910.78px;top:283px;font-size:14px;line-height:40px;color:#3c3c3c;font-family:'Liberation Sans',sans-serif;">|</span>
<span class="t " style="left:927.84px;top:283px;font-size:14.5px;line-height:40px;color:#3c3c3c;font-family:'Liberation Sans',sans-serif;">14</span>
<span class="t " style="left:920.42px;top:283px;font-size:14.5px;line-height:40px;color:#3c3c3c;font-family:'Liberation Sans',sans-serif;">'</span>
<span class="t " style="left:948.62px;top:283px;font-size:14.5px;line-height:40px;color:#3c3c3c;font-family:'Liberation Sans',sans-serif;">'</span>
<span class="t " style="left:957.68px;top:283px;font-size:14px;line-height:40px;color:#3c3c3c;font-family:'Liberation Sans',sans-serif;">|</span>
<span class="t " style="left:974.74px;top:283px;font-size:14.5px;line-height:40px;color:#3c3c3c;font-family:'Liberation Sans',sans-serif;">15</span>
<span class="t " style="left:967.32px;top:283px;font-size:14.5px;line-height:40px;color:#3c3c3c;font-family:'Liberation Sans',sans-serif;">'</span>
<span class="t " style="left:995.52px;top:283px;font-size:14.5px;line-height:40px;color:#3c3c3c;font-family:'Liberation Sans',sans-serif;">'</span>
<span class="t " style="left:1004.58px;top:283px;font-size:14px;line-height:40px;color:#3c3c3c;font-family:'Liberation Sans',sans-serif;">|</span>
<span class="t " style="left:1021.64px;top:283px;font-size:14.5px;line-height:40px;color:#3c3c3c;font-family:'Liberation Sans',sans-serif;">16</span>
<span class="t " style="left:1014.22px;top:283px;font-size:14.5px;line-height:40px;color:#3c3c3c;font-family:'Liberation Sans',sans-serif;">'</span>
<span class="t " style="left:1042.42px;top:283px;font-size:14.5px;line-height:40px;color:#3c3c3c;font-family:'Liberation Sans',sans-serif;">'</span>
<span class="t " style="left:1051.48px;top:283px;font-size:14px;line-height:40px;color:#3c3c3c;font-family:'Liberation Sans',sans-serif;">|</span>
<span class="t " style="left:1068.54px;top:283px;font-size:14.5px;line-height:40px;color:#3c3c3c;font-family:'Liberation Sans',sans-serif;">17</span>
<span class="t " style="left:1061.12px;top:283px;font-size:14.5px;line-height:40px;color:#3c3c3c;font-family:'Liberation Sans',sans-serif;">'</span>
<span class="t " style="left:1089.32px;top:283px;font-size:14.5px;line-height:40px;color:#3c3c3c;font-family:'Liberation Sans',sans-serif;">'</span>
<span class="t " style="left:1098.38px;top:283px;font-size:14px;line-height:40px;color:#3c3c3c;font-family:'Liberation Sans',sans-serif;">|</span>
<span class="t " style="left:1115.44px;top:283px;font-size:14.5px;line-height:40px;color:#3c3c3c;font-family:'Liberation Sans',sans-serif;">18</span>
<span class="t " style="left:1108.02px;top:283px;font-size:14.5px;line-height:40px;color:#3c3c3c;font-family:'Liberation Sans',sans-serif;">'</span>
<span class="t " style="left:1136.22px;top:283px;font-size:14.5px;line-height:40px;color:#3c3c3c;font-family:'Liberation Sans',sans-serif;">'</span>
<span class="t " style="left:1145.28px;top:283px;font-size:14px;line-height:40px;color:#3c3c3c;font-family:'Liberation Sans',sans-serif;">|</span>
<span class="t " style="left:1162.34px;top:283px;font-size:14.5px;line-height:40px;color:#3c3c3c;font-family:'Liberation Sans',sans-serif;">19</span>
<span class="t " style="left:1154.92px;top:283px;font-size:14.5px;line-height:40px;color:#3c3c3c;font-family:'Liberation Sans',sans-serif;">'</span>
<span class="t " style="left:1183.12px;top:283px;font-size:14.5px;line-height:40px;color:#3c3c3c;font-family:'Liberation Sans',sans-serif;">'</span>
<span class="t " style="left:1192.18px;top:283px;font-size:14px;line-height:40px;color:#3c3c3c;font-family:'Liberation Sans',sans-serif;">|</span>
<span class="t " style="left:1209.24px;top:283px;font-size:14.5px;line-height:40px;color:#3c3c3c;font-family:'Liberation Sans',sans-serif;">20</span>
<span class="t " style="left:1201.82px;top:283px;font-size:14.5px;line-height:40px;color:#3c3c3c;font-family:'Liberation Sans',sans-serif;">'</span>
<span class="t " style="left:1230.02px;top:283px;font-size:14.5px;line-height:40px;color:#3c3c3c;font-family:'Liberation Sans',sans-serif;">'</span>
<span class="t " style="left:1239.08px;top:283px;font-size:14px;line-height:40px;color:#3c3c3c;font-family:'Liberation Sans',sans-serif;">|</span>
<span class="t " style="left:1256.14px;top:283px;font-size:14.5px;line-height:40px;color:#3c3c3c;font-family:'Liberation Sans',sans-serif;">21</span>
<span class="t " style="left:1248.72px;top:283px;font-size:14.5px;line-height:40px;color:#3c3c3c;font-family:'Liberation Sans',sans-serif;">'</span>
<span class="t " style="left:1276.92px;top:283px;font-size:14.5px;line-height:40px;color:#3c3c3c;font-family:'Liberation Sans',sans-serif;">'</span>
<span class="t " style="left:1285.98px;top:283px;font-size:14px;line-height:40px;color:#3c3c3c;font-family:'Liberation Sans',sans-serif;">|</span>
<span class="t " style="left:1303.04px;top:283px;font-size:14.5px;line-height:40px;color:#3c3c3c;font-family:'Liberation Sans',sans-serif;">22</span>
<span class="t " style="left:1295.62px;top:283px;font-size:14.5px;line-height:40px;color:#3c3c3c;font-family:'Liberation Sans',sans-serif;">'</span>
<span class="t " style="left:1323.82px;top:283px;font-size:14.5px;line-height:40px;color:#3c3c3c;font-family:'Liberation Sans',sans-serif;">'</span>
<span class="t " style="left:1332.88px;top:283px;font-size:14px;line-height:40px;color:#3c3c3c;font-family:'Liberation Sans',sans-serif;">|</span>
<span class="t " style="left:1349.94px;top:283px;font-size:14.5px;line-height:40px;color:#3c3c3c;font-family:'Liberation Sans',sans-serif;">23</span>
<span class="t " style="left:1342.52px;top:283px;font-size:14.5px;line-height:40px;color:#3c3c3c;font-family:'Liberation Sans',sans-serif;">'</span>
<span class="t " style="left:1370.72px;top:283px;font-size:14.5px;line-height:40px;color:#3c3c3c;font-family:'Liberation Sans',sans-serif;">'</span>
<span class="t " style="left:1379.78px;top:283px;font-size:14px;line-height:40px;color:#3c3c3c;font-family:'Liberation Sans',sans-serif;">|</span>
<span class="t " style="left:1396.84px;top:283px;font-size:14.5px;line-height:40px;color:#3c3c3c;font-family:'Liberation Sans',sans-serif;">24</span>
<span class="t " style="left:1389.42px;top:283px;font-size:14.5px;line-height:40px;color:#3c3c3c;font-family:'Liberation Sans',sans-serif;">'</span>
<span class="t " style="left:1417.62px;top:283px;font-size:14.5px;line-height:40px;color:#3c3c3c;font-family:'Liberation Sans',sans-serif;">'</span>
<span class="t " style="left:1426.68px;top:283px;font-size:14px;line-height:40px;color:#3c3c3c;font-family:'Liberation Sans',sans-serif;">|</span>
<span class="t " style="left:1443.74px;top:283px;font-size:14.5px;line-height:40px;color:#3c3c3c;font-family:'Liberation Sans',sans-serif;">25</span>
<span class="t " style="left:1436.32px;top:283px;font-size:14.5px;line-height:40px;color:#3c3c3c;font-family:'Liberation Sans',sans-serif;">'</span>
<span class="t " style="left:1464.52px;top:283px;font-size:14.5px;line-height:40px;color:#3c3c3c;font-family:'Liberation Sans',sans-serif;">'</span>
<span class="t " style="left:1473.58px;top:283px;font-size:14px;line-height:40px;color:#3c3c3c;font-family:'Liberation Sans',sans-serif;">|</span>
<div class="a " style="left:377px;top:317px;width:1493px;height:632px;background:#fff;"></div>
<div class="a " style="left:431px;top:317px;width:1346px;height:42px;background:#efefef;border-left:1px solid #b9b9b9;border-right:1px solid #c9c9c9;border-bottom:1px solid #c9c9c9"></div>
<div class="a " style="left:623px;top:317px;width:1px;height:41px;background:#c0c0c0;"></div>
<div class="a " style="left:960px;top:317px;width:1px;height:41px;background:#c0c0c0;"></div>
<span class="t " style="left:1345.00px;top:309px;font-size:16px;line-height:40px;color:#111;font-family:'Liberation Sans',sans-serif;transform:scaleX(0.9923);transform-origin:left top;">NO CONTESTA</span>
<div class="a" style="left:1342px;top:337px;width:381px;height:1px;background:repeating-linear-gradient(90deg,#111 0 4px,transparent 4px 6px)"></div>
<div class="a" style="left:1707px;top:320px;width:11.5px;height:11.5px;border:1px solid #1a1a1a;border-left-color:#6a6a6a;border-right-color:#6a6a6a;box-shadow:inset 0 0 0 0.4px #555;background:#fff"></div>
<span class="t " style="left:1726.00px;top:308px;font-size:12.3px;line-height:40px;color:#7c7c7c;font-family:'Liberation Sans',sans-serif;font-weight:bold;transform:scaleX(1.0720);transform-origin:left top;">999</span>
<div class="a " style="left:377px;top:379px;width:1469px;height:1px;background:#8a8a8a;"></div>
<div class="a " style="left:1846px;top:317px;width:1px;height:632px;background:#8a8a8a;"></div>
<div class="a " style="left:377px;top:527px;width:1469px;height:1px;background:#8a8a8a;"></div>
<div class="a " style="left:904px;top:527px;width:1px;height:422px;background:#8a8a8a;"></div>
<span class="t " style="left:405.80px;top:392px;font-size:16px;line-height:40px;color:#111;font-family:'Liberation Sans',sans-serif;">B7.</span>
<span class="t " style="left:433.70px;top:392px;font-size:16px;line-height:40px;color:#000;font-family:'Liberation Sans',sans-serif;font-weight:bold;transform:scaleX(0.9862);transform-origin:left top;">En el presente año, ¿Alguien de su Negocio utilizó la oficina virtual de la DGII para cumplir con sus obligaciones tributarias y/o realizar algún trámite en la DGII?</span>
<svg style="left:1742px;top:405px" width="16" height="16" viewBox="0 0 16 16"><path d="M8 0.5 V15.5 M1.5 4.25 L14.5 11.75 M14.5 4.25 L1.5 11.75" stroke="#000" stroke-width="3.2"/></svg>
<span class="t " style="left:783.60px;top:432px;font-size:12.8px;line-height:40px;color:#7c7c7c;font-family:'Liberation Sans',sans-serif;font-weight:bold;transform:scaleX(1.0355);transform-origin:left top;">|V94|</span>
<span class="t " style="left:1725.40px;top:432px;font-size:12.8px;line-height:40px;color:#7c7c7c;font-family:'Liberation Sans',sans-serif;font-weight:bold;transform:scaleX(1.0355);transform-origin:left top;">|V94|</span>
<span class="t " style="left:449.70px;top:454px;font-size:16px;line-height:40px;color:#111;font-family:'Liberation Sans',sans-serif;transform:scaleX(0.9922);transform-origin:left top;">SI</span>
<span class="t " style="left:449.70px;top:476px;font-size:16px;line-height:40px;color:#111;font-family:'Liberation Sans',sans-serif;transform:scaleX(0.9792);transform-origin:left top;">NO</span>
<div class="a" style="left:431px;top:484px;width:349px;height:1px;background:repeating-linear-gradient(90deg,#111 0 4px,transparent 4px 6px)"></div>
<div class="a" style="left:431px;top:506px;width:349px;height:1px;background:repeating-linear-gradient(90deg,#111 0 4px,transparent 4px 6px)"></div>
<div class="a" style="left:762.3px;top:465.79999999999995px;width:13.2px;height:13.2px;border:1.3px solid #333;border-radius:50%"></div>
<div class="a" style="left:762.3px;top:487.7px;width:13.2px;height:13.2px;border:1.3px solid #333;border-radius:50%"></div>
<span class="t " style="left:784.00px;top:453px;font-size:13.8px;line-height:40px;color:#7c7c7c;font-family:'Liberation Sans',sans-serif;font-weight:bold;">1</span>
<span class="t " style="left:784.00px;top:475px;font-size:13.8px;line-height:40px;color:#7c7c7c;font-family:'Liberation Sans',sans-serif;font-weight:bold;">2</span>
<svg style="left:837px;top:490px" width="15" height="9" viewBox="0 0 15 9"><path d="M1 4.5 C1 2 2.5 1 4.5 1 H8 V2.6 H6.5 C8 3 8 4 7.2 4.4 C8 4.8 7.8 6 6.8 6.3 C7.2 6.8 6.8 7.8 5.8 7.8 H4 C2 7.8 1 6.5 1 4.5 Z" fill="#fff" stroke="#111" stroke-width="1"/><rect x="7.5" y="1" width="6.5" height="1.9" fill="#111"/><path d="M3 4.4 H7 M3.2 6.2 H6.5" stroke="#111" stroke-width="0.8"/></svg>
<span class="t " style="left:859.00px;top:477px;font-size:16px;line-height:40px;color:#111;font-family:'Liberation Sans',sans-serif;transform:scaleX(0.9782);transform-origin:left top;">{lr C1}</span>
<span class="t " style="left:978.75px;top:454px;font-size:16px;line-height:40px;color:#111;font-family:'Liberation Sans',sans-serif;transform:scaleX(0.9542);transform-origin:left top;">NS/NR</span>
<div class="a" style="left:960px;top:484px;width:763px;height:1px;background:repeating-linear-gradient(90deg,#111 0 4px,transparent 4px 6px)"></div>
<div class="a" style="left:1706.3000000000002px;top:465.79999999999995px;width:13.2px;height:13.2px;border:1.3px solid #333;border-radius:50%"></div>
<span class="t " style="left:1727.00px;top:453px;font-size:13.8px;line-height:40px;color:#7c7c7c;font-family:'Liberation Sans',sans-serif;font-weight:bold;">3</span>
<svg style="left:1780px;top:469px" width="15" height="9" viewBox="0 0 15 9"><path d="M1 4.5 C1 2 2.5 1 4.5 1 H8 V2.6 H6.5 C8 3 8 4 7.2 4.4 C8 4.8 7.8 6 6.8 6.3 C7.2 6.8 6.8 7.8 5.8 7.8 H4 C2 7.8 1 6.5 1 4.5 Z" fill="#fff" stroke="#111" stroke-width="1"/><rect x="7.5" y="1" width="6.5" height="1.9" fill="#111"/><path d="M3 4.4 H7 M3.2 6.2 H6.5" stroke="#111" stroke-width="0.8"/></svg>
<span class="t " style="left:1802.00px;top:455px;font-size:16px;line-height:40px;color:#111;font-family:'Liberation Sans',sans-serif;transform:scaleX(0.9782);transform-origin:left top;">{lr C1}</span>
<span class="t " style="left:406.00px;top:540px;font-size:16px;line-height:40px;color:#111;font-family:'Liberation Sans',sans-serif;">B8.</span>
<span class="t " style="left:433.75px;top:540px;font-size:16px;line-height:40px;color:#000;font-family:'Liberation Sans',sans-serif;font-weight:bold;transform:scaleX(0.9949);transform-origin:left top;">En el caso de haber utilizado la página</span>
<span class="t " style="left:433.75px;top:559px;font-size:16px;line-height:40px;color:#000;font-family:'Liberation Sans',sans-serif;font-weight:bold;transform:scaleX(0.9806);transform-origin:left top;">web - oficina virtual de la DGII, ¿Qué</span>
<span class="t " style="left:433.75px;top:578px;font-size:16px;line-height:40px;color:#000;font-family:'Liberation Sans',sans-serif;font-weight:bold;transform:scaleX(0.9932);transform-origin:left top;">trámites realizó su Negocio durante el</span>
<span class="t " style="left:433.75px;top:597px;font-size:16px;line-height:40px;color:#000;font-family:'Liberation Sans',sans-serif;font-weight:bold;">año? (Marque los que corresponden)</span>
<svg style="left:799px;top:553px" width="16" height="16" viewBox="0 0 16 16"><path d="M8 0.5 V15.5 M1.5 4.25 L14.5 11.75 M14.5 4.25 L1.5 11.75" stroke="#000" stroke-width="3.2"/></svg>
<span class="t " style="left:782.70px;top:638px;font-size:12.8px;line-height:40px;color:#7c7c7c;font-family:'Liberation Sans',sans-serif;font-weight:bold;transform:scaleX(1.0188);transform-origin:left top;">|V95|</span>
<span class="t " style="left:433.30px;top:736px;font-size:16px;line-height:40px;color:#111;font-family:'Liberation Sans',sans-serif;transform:scaleX(0.9709);transform-origin:left top;">Consulta de la situación tributaria</span>
<div class="a" style="left:431px;top:765px;width:349px;height:1px;background:repeating-linear-gradient(90deg,#111 0 4px,transparent 4px 6px)"></div>
<div class="a" style="left:763px;top:748px;width:13px;height:13px;border:1px solid #1a1a1a;border-left-color:#6a6a6a;border-right-color:#6a6a6a;box-shadow:inset 0 0 0 0.4px #555;background:#fff"></div>
<span class="t " style="left:783.75px;top:736px;font-size:13.8px;line-height:40px;color:#7c7c7c;font-family:'Liberation Sans',sans-serif;font-weight:bold;">1</span>
<span class="t " style="left:433.30px;top:757px;font-size:16px;line-height:40px;color:#111;font-family:'Liberation Sans',sans-serif;transform:scaleX(0.9638);transform-origin:left top;">Inscripción y actualización del RNC</span>
<div class="a" style="left:431px;top:786px;width:349px;height:1px;background:repeating-linear-gradient(90deg,#111 0 4px,transparent 4px 6px)"></div>
<div class="a" style="left:763px;top:769px;width:13px;height:13px;border:1px solid #1a1a1a;border-left-color:#6a6a6a;border-right-color:#6a6a6a;box-shadow:inset 0 0 0 0.4px #555;background:#fff"></div>
<span class="t " style="left:783.75px;top:757px;font-size:13.8px;line-height:40px;color:#7c7c7c;font-family:'Liberation Sans',sans-serif;font-weight:bold;">2</span>
<span class="t " style="left:433.30px;top:778px;font-size:16px;line-height:40px;color:#111;font-family:'Liberation Sans',sans-serif;transform:scaleX(0.9896);transform-origin:left top;">Seguimiento de Solicitudes</span>
<div class="a" style="left:431px;top:843px;width:349px;height:1px;background:repeating-linear-gradient(90deg,#111 0 4px,transparent 4px 6px)"></div>
<div class="a" style="left:763px;top:790px;width:13px;height:13px;border:1px solid #1a1a1a;border-left-color:#6a6a6a;border-right-color:#6a6a6a;box-shadow:inset 0 0 0 0.4px #555;background:#fff"></div>
<span class="t " style="left:783.75px;top:778px;font-size:13.8px;line-height:40px;color:#7c7c7c;font-family:'Liberation Sans',sans-serif;font-weight:bold;">3</span>
<span class="t " style="left:433.30px;top:835px;font-size:16px;line-height:40px;color:#111;font-family:'Liberation Sans',sans-serif;transform:scaleX(0.9834);transform-origin:left top;">Autorización para emitir NCF</span>
<div class="a" style="left:431px;top:864px;width:349px;height:1px;background:repeating-linear-gradient(90deg,#111 0 4px,transparent 4px 6px)"></div>
<div class="a" style="left:763px;top:848px;width:13px;height:13px;border:1px solid #1a1a1a;border-left-color:#6a6a6a;border-right-color:#6a6a6a;box-shadow:inset 0 0 0 0.4px #555;background:#fff"></div>
<span class="t " style="left:783.75px;top:836px;font-size:13.8px;line-height:40px;color:#7c7c7c;font-family:'Liberation Sans',sans-serif;font-weight:bold;">4</span>
<span class="t " style="left:433.30px;top:856px;font-size:16px;line-height:40px;color:#111;font-family:'Liberation Sans',sans-serif;transform:scaleX(0.9877);transform-origin:left top;">Solicitar Clave</span>
<div class="a" style="left:431px;top:903px;width:349px;height:1px;background:repeating-linear-gradient(90deg,#111 0 4px,transparent 4px 6px)"></div>
<div class="a" style="left:763px;top:868px;width:13px;height:13px;border:1px solid #1a1a1a;border-left-color:#6a6a6a;border-right-color:#6a6a6a;box-shadow:inset 0 0 0 0.4px #555;background:#fff"></div>
<span class="t " style="left:783.75px;top:856px;font-size:13.8px;line-height:40px;color:#7c7c7c;font-family:'Liberation Sans',sans-serif;font-weight:bold;">5</span>
<span class="t " style="left:433.30px;top:894px;font-size:16px;line-height:40px;color:#111;font-family:'Liberation Sans',sans-serif;transform:scaleX(0.9816);transform-origin:left top;">Generar autorizaciones de pago</span>
<div class="a" style="left:431px;top:924px;width:349px;height:1px;background:repeating-linear-gradient(90deg,#111 0 4px,transparent 4px 6px)"></div>
<div class="a" style="left:763px;top:907px;width:13px;height:13px;border:1px solid #1a1a1a;border-left-color:#6a6a6a;border-right-color:#6a6a6a;box-shadow:inset 0 0 0 0.4px #555;background:#fff"></div>
<span class="t " style="left:783.75px;top:895px;font-size:13.8px;line-height:40px;color:#7c7c7c;font-family:'Liberation Sans',sans-serif;font-weight:bold;">6</span>
<span class="t " style="left:433.30px;top:916px;font-size:16px;line-height:40px;color:#111;font-family:'Liberation Sans',sans-serif;transform:scaleX(0.9683);transform-origin:left top;">Declaración y/o pago del Impuesto a la Renta</span>
<div class="a" style="left:431px;top:945px;width:349px;height:1px;background:repeating-linear-gradient(90deg,#111 0 4px,transparent 4px 6px)"></div>
<div class="a" style="left:763px;top:928px;width:13px;height:13px;border:1px solid #1a1a1a;border-left-color:#6a6a6a;border-right-color:#6a6a6a;box-shadow:inset 0 0 0 0.4px #555;background:#fff"></div>
<span class="t " style="left:783.75px;top:916px;font-size:13.8px;line-height:40px;color:#7c7c7c;font-family:'Liberation Sans',sans-serif;font-weight:bold;">7</span>
<span class="t " style="left:962.00px;top:541px;font-size:15px;line-height:40px;color:#555555;font-family:'Liberation Sans',sans-serif;font-style:italic;transform:scaleX(1.1881);transform-origin:left top;">Mostrar: Sólo si «Alguien negocio utilizó oficina virtual dgii cumplir con obligaciones tributarias</span>
<span class="t " style="left:962.00px;top:560px;font-size:15px;line-height:40px;color:#555555;font-family:'Liberation Sans',sans-serif;font-style:italic;transform:scaleX(1.1559);transform-origin:left top;">y/o realizar trámite en dgii» es «SI» (Vea pregunta: B7). En caso contrario, pasar a la siguiente</span>
<span class="t " style="left:962.00px;top:579px;font-size:15px;line-height:40px;color:#555555;font-family:'Liberation Sans',sans-serif;font-style:italic;transform:scaleX(1.2463);transform-origin:left top;">pregunta.</span>
<span class="t " style="left:920.40px;top:638px;font-size:16px;line-height:40px;color:#111;font-family:'Liberation Sans',sans-serif;transform:scaleX(0.9966);transform-origin:left top;">B9.A.</span>
<span class="t " style="left:962.50px;top:638px;font-size:16px;line-height:40px;color:#000;font-family:'Liberation Sans',sans-serif;font-weight:bold;transform:scaleX(0.9945);transform-origin:left top;">Generalmente, ¿Cómo se conectan en su Negocio a internet para cumplir con sus obligaciones</span>
<span class="t " style="left:962.50px;top:657px;font-size:16px;line-height:40px;color:#000;font-family:'Liberation Sans',sans-serif;font-weight:bold;transform:scaleX(0.9870);transform-origin:left top;">tributarias en la página web u Oficina Virtual (OFV) de la DGII? (Marque una o más opciones si</span>
<span class="t " style="left:962.50px;top:676px;font-size:16px;line-height:40px;color:#000;font-family:'Liberation Sans',sans-serif;font-weight:bold;transform:scaleX(1.0123);transform-origin:left top;">corresponde)</span>
<svg style="left:1742px;top:651px" width="16" height="16" viewBox="0 0 16 16"><path d="M8 0.5 V15.5 M1.5 4.25 L14.5 11.75 M14.5 4.25 L1.5 11.75" stroke="#000" stroke-width="3.2"/></svg>
<span class="t " style="left:1725.40px;top:735px;font-size:12.8px;line-height:40px;color:#7c7c7c;font-family:'Liberation Sans',sans-serif;font-weight:bold;transform:scaleX(1.0188);transform-origin:left top;">|V97|</span>
<span class="t " style="left:962.00px;top:758px;font-size:16px;line-height:40px;color:#111;font-family:'Liberation Sans',sans-serif;transform:scaleX(0.9711);transform-origin:left top;">Conexión propia, pagando un monto fijo mensual</span>
<div class="a" style="left:960px;top:786px;width:763px;height:1px;background:repeating-linear-gradient(90deg,#111 0 4px,transparent 4px 6px)"></div>
<div class="a" style="left:1707px;top:769px;width:13px;height:13px;border:1px solid #1a1a1a;border-left-color:#6a6a6a;border-right-color:#6a6a6a;box-shadow:inset 0 0 0 0.4px #555;background:#fff"></div>
<span class="t " style="left:1727.00px;top:757px;font-size:13.8px;line-height:40px;color:#7c7c7c;font-family:'Liberation Sans',sans-serif;font-weight:bold;">1</span>
<span class="t " style="left:962.00px;top:778px;font-size:16px;line-height:40px;color:#111;font-family:'Liberation Sans',sans-serif;transform:scaleX(0.9665);transform-origin:left top;">En forma gratuita, desde la oficina de su contador, una oficina de la DGII, un Centro público o algún otro</span>
<div class="a" style="left:960px;top:843px;width:763px;height:1px;background:repeating-linear-gradient(90deg,#111 0 4px,transparent 4px 6px)"></div>
<div class="a" style="left:1707px;top:790px;width:13px;height:13px;border:1px solid #1a1a1a;border-left-color:#6a6a6a;border-right-color:#6a6a6a;box-shadow:inset 0 0 0 0.4px #555;background:#fff"></div>
<span class="t " style="left:1727.00px;top:778px;font-size:13.8px;line-height:40px;color:#7c7c7c;font-family:'Liberation Sans',sans-serif;font-weight:bold;">2</span>
<span class="t " style="left:962.00px;top:797px;font-size:16px;line-height:40px;color:#111;font-family:'Liberation Sans',sans-serif;transform:scaleX(0.9645);transform-origin:left top;">lugar con internet gratuito</span>
<span class="t " style="left:962.00px;top:836px;font-size:16px;line-height:40px;color:#111;font-family:'Liberation Sans',sans-serif;transform:scaleX(0.9907);transform-origin:left top;">Desde un cibercafé o similar</span>
<div class="a" style="left:960px;top:864px;width:763px;height:1px;background:repeating-linear-gradient(90deg,#111 0 4px,transparent 4px 6px)"></div>
<div class="a" style="left:1707px;top:847px;width:13px;height:13px;border:1px solid #1a1a1a;border-left-color:#6a6a6a;border-right-color:#6a6a6a;box-shadow:inset 0 0 0 0.4px #555;background:#fff"></div>
<span class="t " style="left:1727.00px;top:835px;font-size:13.8px;line-height:40px;color:#7c7c7c;font-family:'Liberation Sans',sans-serif;font-weight:bold;">3</span>
<span class="t " style="left:962.00px;top:856px;font-size:16px;line-height:40px;color:#111;font-family:'Liberation Sans',sans-serif;transform:scaleX(0.9673);transform-origin:left top;">Conexión Internet móvil propia, pagando un monto por plan de datos</span>
<div class="a" style="left:960px;top:903px;width:763px;height:1px;background:repeating-linear-gradient(90deg,#111 0 4px,transparent 4px 6px)"></div>
<div class="a" style="left:1707px;top:868px;width:13px;height:13px;border:1px solid #1a1a1a;border-left-color:#6a6a6a;border-right-color:#6a6a6a;box-shadow:inset 0 0 0 0.4px #555;background:#fff"></div>
<span class="t " style="left:1727.00px;top:856px;font-size:13.8px;line-height:40px;color:#7c7c7c;font-family:'Liberation Sans',sans-serif;font-weight:bold;">4</span>
<div class="a " style="left:1870px;top:317px;width:25px;height:632px;background:#7399c1;"></div>
<div class="a" style="left:1870px;top:317px;width:24px;height:25px;border:1px solid #5c7699;background:linear-gradient(90deg,#dbe7f7 0 50%,#c5d7ef 50% 100%)"></div>
<svg style="left:1877px;top:326px" width="10" height="6" viewBox="0 0 10 6"><path d="M0 5.5 L5 0.5 L10 5.5 Z" fill="#3b4e6c"/></svg>
<div class="a" style="left:1870px;top:431px;width:24px;height:17px;border:1px solid #5c7699;background:linear-gradient(90deg,#dbe7f7 0 50%,#c5d7ef 50% 100%)"></div>
<div class="a" style="left:1870px;top:924px;width:24px;height:25px;border:1px solid #5c7699;background:linear-gradient(90deg,#dbe7f7 0 50%,#c5d7ef 50% 100%)"></div>
<svg style="left:1877px;top:934px" width="10" height="6" viewBox="0 0 10 6"><path d="M0 0.5 L5 5.5 L10 0.5 Z" fill="#3b4e6c"/></svg>
<div class="a " style="left:1895px;top:317px;width:25px;height:632px;background:#c3d9f4;"></div>
<div class="a" style="left:1895px;top:324px;width:23px;height:81px;background:linear-gradient(90deg,#cddff6,#eef4fc);border-right:1px solid #2f4f8f;border-bottom:1px solid #2f4f8f;border-bottom-right-radius:6px;border-top-right-radius:6px"></div>
<svg style="left:1895px;top:317px" width="25" height="30" viewBox="0 0 25 30"><path d="M0 0 L0 9 L20 28 L25 28 L25 0 Z" fill="#c3d9f4"/><path d="M0 9 L20 28" stroke="#2f4f8f" stroke-width="1"/></svg>
<div class="a" style="left:1895px;top:389px;width:23px;height:156px;background:linear-gradient(90deg,#fbc88a,#fde5c6);border-right:1px solid #2f4f8f;border-bottom:1px solid #2f4f8f;border-bottom-right-radius:6px;border-top-right-radius:6px"></div>
<svg style="left:1895px;top:389px" width="25" height="28" viewBox="0 0 25 28"><path d="M0 0 L0 0 L21 20 L21 0 Z" fill="#e8f0fb"/><path d="M0 0 L21 20" stroke="#2f4f8f" stroke-width="1"/></svg>
<div class="a" style="left:1895px;top:544px;width:23px;height:131px;background:linear-gradient(90deg,#cddff6,#eef4fc);border-right:1px solid #2f4f8f;border-bottom:1px solid #2f4f8f;border-bottom-right-radius:6px;border-top-right-radius:6px"></div>
<div class="a" style="left:1895px;top:674px;width:23px;height:190px;background:linear-gradient(90deg,#cddff6,#eef4fc);border-right:1px solid #2f4f8f;border-bottom:1px solid #2f4f8f;border-bottom-right-radius:6px;border-top-right-radius:6px"></div>
<div class="a" style="left:1895px;top:863px;width:23px;height:98px;background:linear-gradient(90deg,#cddff6,#eef4fc);border-right:1px solid #2f4f8f;border-bottom:1px solid #2f4f8f;border-bottom-right-radius:6px;border-top-right-radius:6px"></div>
<div class="a " style="left:1895px;top:940px;width:25px;height:34px;background:#c3d9f4;"></div>
<span class="t" style="left:1899px;top:358px;font-size:15px;line-height:15px;color:#2a4a8c;transform-origin:0 0;transform:translate(15.0px,0) rotate(90deg) scaleX(1.0994)">Intro</span>
<span class="t" style="left:1899px;top:420px;font-size:15px;line-height:15px;color:#2a4a8c;font-weight:bold;transform-origin:0 0;transform:translate(15.0px,0) rotate(90deg) scaleX(1.1006)">Questionnaire</span>
<span class="t" style="left:1899px;top:557px;font-size:15px;line-height:15px;color:#2a4a8c;transform-origin:0 0;transform:translate(15.0px,0) rotate(90deg) scaleX(1.1223)">Answer sheet</span>
<span class="t" style="left:1899px;top:687px;font-size:15px;line-height:15px;color:#2a4a8c;transform-origin:0 0;transform:translate(15.0px,0) rotate(90deg) scaleX(1.1716)">Batch answer sheet 1</span>
<span class="t" style="left:1899px;top:878px;font-size:15px;line-height:15px;color:#2a4a8c;transform-origin:0 0;transform:translate(15.0px,0) rotate(90deg) scaleX(1.2189)">Batch a</span>
<div class="a " style="left:1895px;top:940px;width:25px;height:34px;background:#c3d9f4;"></div>
<svg style="left:1900px;top:942px" width="13" height="26" viewBox="0 0 13 26"><path d="M0.5 7 L6.5 1 L12.5 7 Z" fill="none" stroke="#1c3f8f" stroke-width="2"/><path d="M0.5 20 H12.5 L6.5 25.5 Z" fill="#1c3f8f"/></svg>
<div class="a " style="left:377px;top:949px;width:893px;height:25px;background:linear-gradient(#7e9fcb,#a6bde1);"></div>
<svg style="left:377px;top:949px" width="160" height="25" viewBox="0 0 160 25"><defs><linearGradient id="tg" x1="0" y1="0" x2="0" y2="1"><stop offset="0" stop-color="#fff"/><stop offset="0.5" stop-color="#f3f7fd"/><stop offset="1" stop-color="#c9dcf5"/></linearGradient></defs><path d="M0 24 L0 4 Q0 0.5 4 0.5 L152 0.5 L128 24 Z" fill="url(#tg)"/><path d="M0 24.5 H128" stroke="#6e8bb3" stroke-width="1"/></svg>
<span class="t " style="left:386.00px;top:942px;font-size:13px;line-height:40px;color:#111;font-family:'Liberation Sans',sans-serif;transform:scaleX(1.0231);transform-origin:left top;">Paper Questionnaire</span>
<div class="a " style="left:1270px;top:949px;width:4px;height:25px;background:#dfe9f7;"></div>
<div class="a " style="left:1274px;top:949px;width:596px;height:25px;background:#7399c1;"></div>
<div class="a" style="left:1275px;top:950px;width:25px;height:23px;border:1px solid #5c7699;background:linear-gradient(#dce8f8 0 45%,#c3d5ef 45% 100%)"></div>
<svg style="left:1283px;top:956px" width="6" height="10" viewBox="0 0 6 10"><path d="M5.5 0 L0.5 5 L5.5 10 Z" fill="#3b4e6c"/></svg>
<div class="a" style="left:1299px;top:950px;width:514px;height:23px;border:1px solid #5c7699;background:linear-gradient(#dce8f8 0 45%,#c3d5ef 45% 100%)"></div>
<div class="a" style="left:1845px;top:950px;width:25px;height:23px;border:1px solid #5c7699;background:linear-gradient(#dce8f8 0 45%,#c3d5ef 45% 100%)"></div>
<svg style="left:1855px;top:956px" width="6" height="10" viewBox="0 0 6 10"><path d="M0.5 0 L5.5 5 L0.5 10 Z" fill="#3b4e6c"/></svg>
<div class="a " style="left:1870px;top:949px;width:25px;height:25px;background:#8aa7d0;"></div>
<div class="a " style="left:0px;top:974px;width:1920px;height:34px;background:#f0f0f0;"></div>
<span class="t " style="left:18.00px;top:972px;font-size:15.5px;line-height:40px;color:#111;font-family:'Liberation Sans',sans-serif;transform:scaleX(0.9244);transform-origin:left top;">PROCESSOR READY...</span>
<span class="t " style="left:1286.00px;top:972px;font-size:15.5px;line-height:40px;color:#111;font-family:'Liberation Sans',sans-serif;transform:scaleX(1.0076);transform-origin:left top;">User: Jgarcia</span>
<svg style="left:1889px;top:982px" width="24" height="20" viewBox="0 0 24 20"><path d="M1.5 7 A15 15 0 0 1 22.5 7 M5 10.5 A10 10 0 0 1 19 10.5 M8.3 14 A5.5 5.5 0 0 1 15.7 14" fill="none" stroke="#b8b8b8" stroke-width="2.2"/><circle cx="12" cy="17.5" r="1.8" fill="#b8b8b8"/></svg>
<div class="a " style="left:0px;top:1008px;width:1920px;height:72px;background:linear-gradient(90deg,#dfdbd6,#e2dcd6 50%,#e0dcd7);"></div>
<div class="a " style="left:0px;top:1008px;width:1920px;height:2px;background:#b5b1ad;"></div>
<svg style="left:28px;top:1016px" width="46" height="48" viewBox="0 0 46 48"><defs><linearGradient id="wg" x1="0" y1="0" x2="0" y2="1"><stop offset="0" stop-color="#ffc13a"/><stop offset="1" stop-color="#f27a1a"/></linearGradient></defs>
<path d="M3 28 C8 34 20 35 28 27 C33 22 35 18 36 15 C41 25 38 40 24 44 C14 46 6 40 3 28 Z" fill="url(#wg)"/>
<circle cx="30.5" cy="14.5" r="12" fill="#c9221d"/><text x="30.5" y="20" text-anchor="middle" font-family="Liberation Sans" font-size="15" fill="#fff">1</text></svg>
<svg style="left:224px;top:1027px" width="35" height="35" viewBox="0 0 35 35"><defs><linearGradient id="wl" gradientUnits="userSpaceOnUse" x1="0" y1="0" x2="35" y2="35"><stop offset="0" stop-color="#52ccff"/><stop offset="1" stop-color="#0b6fd6"/></linearGradient></defs>
<rect x="0" y="0" width="17" height="17" rx="1.5" fill="url(#wl)"/><rect x="18" y="0" width="17" height="17" rx="1.5" fill="url(#wl)"/><rect x="0" y="18" width="17" height="17" rx="1.5" fill="url(#wl)"/><rect x="18" y="18" width="17" height="17" rx="1.5" fill="url(#wl)"/></svg>
<svg style="left:292px;top:1027px" width="35" height="35" viewBox="0 0 35 35"><circle cx="14" cy="13.5" r="11.3" fill="none" stroke="#222" stroke-width="3"/><path d="M22.5 22 L31 30.5" stroke="#222" stroke-width="3.4" stroke-linecap="round"/></svg>
<svg style="left:357px;top:1027px" width="36" height="35" viewBox="0 0 36 35"><defs><linearGradient id="tv" x1="0" y1="0" x2="1" y2="1"><stop offset="0" stop-color="#fafafa"/><stop offset="1" stop-color="#d8d8d8"/></linearGradient><linearGradient id="tv2" x1="0" y1="0" x2="0" y2="1"><stop offset="0" stop-color="#555"/><stop offset="1" stop-color="#111"/></linearGradient></defs>
<rect x="8.5" y="0" width="27" height="24" rx="2" fill="url(#tv)"/><rect x="0" y="9" width="27" height="25.5" rx="2" fill="url(#tv2)"/><rect x="8.5" y="9" width="18.5" height="15" fill="#c4c4c4"/></svg>
<svg style="left:423px;top:1026px" width="36" height="36" viewBox="0 0 36 36"><circle cx="18" cy="18" r="17.3" fill="#4a80c9" stroke="#dbe7f5" stroke-width="1"/><path d="M11 9 H24 V12 M11 9 L18 18 L11 27 H24.5 V24" fill="none" stroke="#fff" stroke-width="2.6"/></svg>
<svg style="left:489px;top:1026px" width="36" height="36" viewBox="0 0 36 36"><rect width="36" height="36" fill="#ef443b"/><path d="M6.5 18 L13 11.5 L19.5 18 L13 24.5 Z" fill="#fff"/><path d="M18 11.5 L24.5 18 L18 24.5 M22 11.5 L28.5 18 L22 24.5" fill="none" stroke="#fff" stroke-width="2.6"/></svg>
<svg style="left:555px;top:1026px" width="36" height="36" viewBox="0 0 36 36">
<path d="M18 18 L3.1 9.4 A17.3 17.3 0 0 1 32.9 9.4 Z" fill="#db4437"/>
<path d="M18 18 L32.9 9.4 A17.3 17.3 0 0 1 18 35.3 Z" fill="#fcc934"/>
<path d="M18 18 L18 35.3 A17.3 17.3 0 0 1 3.1 9.4 Z" fill="#1e9e48"/>
<circle cx="18" cy="18" r="8" fill="#fff"/><circle cx="18" cy="18" r="6.3" fill="#3b7bea"/></svg>
<svg style="left:621px;top:1026px" width="37" height="36" viewBox="0 0 37 36"><rect x="0.5" y="0.5" width="36" height="35" fill="#b0111a" stroke="#7a0a10" stroke-width="1" stroke-dasharray="1.5 1.5"/><text x="18.5" y="29" text-anchor="middle" font-family="Liberation Sans" font-weight="bold" font-style="italic" font-size="27" fill="#fff">Fz</text></svg>
<svg style="left:686px;top:1027px" width="37" height="35" viewBox="0 0 37 35"><path d="M0.5 3 Q0.5 0.5 3 0.5 H12 L15 3.5 H34 Q36.5 3.5 36.5 6 V33 Q36.5 34.5 35 34.5 H2 Q0.5 34.5 0.5 33 Z" fill="#f5bd2f"/><rect x="0.5" y="6" width="36" height="28.5" rx="1.5" fill="#fcd664"/><rect x="6" y="22.5" width="25" height="12" rx="2.5" fill="#1f7ad6"/><rect x="12" y="26" width="13" height="2" fill="#fff" opacity="0.8"/></svg>
<svg style="left:752px;top:1026px" width="37" height="37" viewBox="0 0 37 37"><defs><linearGradient id="eg" x1="0" y1="0" x2="1" y2="1"><stop offset="0" stop-color="#35c1f1"/><stop offset="0.6" stop-color="#2ec07a"/><stop offset="1" stop-color="#1e73c9"/></linearGradient></defs>
<path d="M18.5 1 C29 1 36 8.5 36 17 C36 22 32 25 27 25 C22 25 19 22.5 20 19 C14 19 12 24 13 28 C15 34 22 36 28 34 C24 37 18 37 13 35 C5 32 1 25 1 18 C1 8 9 1 18.5 1 Z" fill="url(#eg)"/><path d="M2 18 C3 9 12 5 19 8 C14 9 9 13 9 21 C5 22 3 21 2 18 Z" fill="#1b58b8"/>
<circle cx="11" cy="26" r="4" fill="#9a9a9a"/><path d="M3 37 C3 31 19 31 19 37 Z" fill="#9a9a9a"/></svg>
<svg style="left:820px;top:1026px" width="35" height="37" viewBox="0 0 35 37"><ellipse cx="17.5" cy="18.5" rx="16.5" ry="17.8" fill="#e11a2a"/><ellipse cx="17.5" cy="18.5" rx="6.8" ry="13.3" fill="#e6dfd8"/></svg>
<svg style="left:885px;top:1024px" width="36" height="39" viewBox="0 0 36 39"><defs><radialGradient id="ff" cx="0.7" cy="0.2" r="0.9"><stop offset="0" stop-color="#ffe24a"/><stop offset="0.5" stop-color="#ff8a16"/><stop offset="1" stop-color="#e3134f"/></radialGradient></defs>
<circle cx="18" cy="21" r="17.2" fill="url(#ff)"/><path d="M22 2 C28 6 30 10 29 14 L24 10 Z" fill="#ffcf2e"/><circle cx="18" cy="22" r="9" fill="#7b3fd1"/><circle cx="17" cy="21" r="5" fill="#b45ef0"/></svg>
<svg style="left:951px;top:1026px" width="36" height="36" viewBox="0 0 36 36"><defs><radialGradient id="ie" cx="0.4" cy="0.3" r="0.7"><stop offset="0" stop-color="#aee4ff"/><stop offset="0.5" stop-color="#2a8fe0"/><stop offset="1" stop-color="#0a4a99"/></radialGradient></defs>
<circle cx="19" cy="16" r="14.5" fill="url(#ie)"/><path d="M1 25 C5 34 22 35 33 19 L35 24 L35 11 L25 14 L29 17 C22 27 10 29 4 22 Z" fill="#fff" stroke="#14469a" stroke-width="1.2"/></svg>
<svg style="left:1017px;top:1026px" width="37" height="37" viewBox="0 0 37 37"><path d="M1 1 H36 V10 H27 V13 H23 V35 H14 V13 H10 V10 H1 Z" fill="#3a8fd6" stroke="#1a2fa0" stroke-width="1.5"/><rect x="1" y="14" width="19" height="21" fill="#f2f2f2" stroke="#444" stroke-width="1"/><rect x="3" y="16" width="15" height="16" fill="#fff" stroke="#888" stroke-width="0.8"/><path d="M9 19 L30 32 L27 35 L7 22 Z" fill="#f5c43a" stroke="#333" stroke-width="0.8"/><path d="M27 30 L31 33 L28 35 Z" fill="#e4473a"/></svg>
<svg style="left:1085px;top:1028px" width="33" height="33" viewBox="0 0 33 33"><defs><linearGradient id="ph" x1="0" y1="0" x2="1" y2="1"><stop offset="0" stop-color="#3ba9f4"/><stop offset="1" stop-color="#7a5bd6"/></linearGradient></defs><rect width="32" height="32" rx="4" fill="url(#ph)"/><circle cx="23" cy="8" r="2.7" fill="#fff"/><path d="M0 26 L12 13 L25 25 L32 19 V28 Q32 32 28 32 H4 Q0 32 0 28 Z" fill="#6fd6ff"/><path d="M0 30 L13 18 L27 32 H4 Q0 32 0 30 Z" fill="#27a3e8"/></svg>
<svg style="left:1149px;top:1028px" width="36" height="33" viewBox="0 0 36 33"><rect x="8" y="0" width="28" height="33" rx="2" fill="#2b7cd3"/><rect x="8" y="8" width="28" height="9" fill="#185abd"/><rect x="8" y="17" width="28" height="9" fill="#134a9c"/><rect x="8" y="26" width="28" height="7" rx="2" fill="#103f91"/><rect x="0" y="7" width="19" height="19" rx="2" fill="#185abd"/><text x="9.5" y="22" text-anchor="middle" font-family="Liberation Sans" font-weight="bold" font-size="13" fill="#fff">W</text></svg>
<svg style="left:1215px;top:1027px" width="36" height="34" viewBox="0 0 36 34"><path d="M16 1 C27 1 33 6 33 12 C33 17 27 16 25 19 C23 23 27 26 24 30 C20 34 4 33 1 21 C-1 11 6 1 16 1 Z" fill="#31aef0"/><circle cx="9" cy="16" r="3" fill="#e45b2b"/><circle cx="11" cy="9" r="3" fill="#3bb34a"/><circle cx="19" cy="6.5" r="3" fill="#f2c21b"/><circle cx="18" cy="19" r="2" fill="#fff"/><rect x="26" y="9" width="3" height="24" fill="#a8733a"/><path d="M24 3 H31 L29.5 10 H25.5 Z" fill="#e8d3a0"/></svg>
<div class="a " style="left:1279px;top:1016px;width:51px;height:56px;background:#f2efec;border-radius:5px;box-shadow:3px 0 0 -1px #ece7e1"></div>
<svg style="left:1287px;top:1026px" width="40" height="38" viewBox="0 0 40 38"><ellipse cx="14" cy="6" rx="5" ry="3" fill="#2e8a2e"/><path d="M9 6 L5 4 M19 6 L22 8" stroke="#1a5a1a" stroke-width="1.5"/><ellipse cx="11" cy="14" rx="6" ry="3.5" fill="#c2c21a" stroke="#333" stroke-width="0.7"/><rect x="11" y="14" width="22" height="21" fill="#fff" stroke="#333" stroke-width="1.2"/><rect x="11" y="14" width="22" height="4" fill="#3aa0b8"/><text x="25" y="31" text-anchor="middle" font-family="Liberation Sans" font-weight="bold" font-size="11" fill="#1a2a9a">32</text><path d="M14 23 C17 21 19 25 18 30 L13 31 Z" fill="#a0161a"/><path d="M33 28 L37 28 L33 33 Z" fill="#999"/></svg>
<div class="a " style="left:1295px;top:1068px;width:24px;height:4px;background:#e5322c;border-radius:2px"></div>
<div class="a " style="left:634.3px;top:1068px;width:10px;height:4px;background:#8d8883;border-radius:2px"></div>
<div class="a " style="left:700.3px;top:1068px;width:10px;height:4px;background:#8d8883;border-radius:2px"></div>
<div class="a " style="left:766.2px;top:1068px;width:10px;height:4px;background:#8d8883;border-radius:2px"></div>
<div class="a " style="left:832.5px;top:1068px;width:10px;height:4px;background:#8d8883;border-radius:2px"></div>
<div class="a " style="left:1030.4px;top:1068px;width:10px;height:4px;background:#8d8883;border-radius:2px"></div>
<div class="a " style="left:1096.3px;top:1068px;width:10px;height:4px;background:#8d8883;border-radius:2px"></div>
<div class="a " style="left:1162.4px;top:1068px;width:10px;height:4px;background:#8d8883;border-radius:2px"></div>
<div class="a " style="left:1228.4px;top:1068px;width:10px;height:4px;background:#8d8883;border-radius:2px"></div>
<div class="a" style="left:1360.4px;top:1041.4px;width:5.2px;height:5.2px;border-radius:50%;background:#1b1b1b"></div>
<div class="a" style="left:1369.9px;top:1041.4px;width:5.2px;height:5.2px;border-radius:50%;background:#1b1b1b"></div>
<div class="a" style="left:1379.4px;top:1041.4px;width:5.2px;height:5.2px;border-radius:50%;background:#1b1b1b"></div>
<div class="a " style="left:1409px;top:1010px;width:1px;height:70px;background:#d4cfc9;"></div>
<div class="a " style="left:1271px;top:1010px;width:1px;height:70px;background:#dbd6d0;"></div>
<svg style="left:1516px;top:1038px" width="18" height="11" viewBox="0 0 18 11"><path d="M1.5 9.5 L9 2 L16.5 9.5" fill="none" stroke="#1b1b1b" stroke-width="1.8"/></svg>
<span class="t " style="left:1563.58px;top:1015px;font-size:17px;line-height:40px;color:#1b1b1b;font-family:'Liberation Sans',sans-serif;transform:scaleX(0.9501);transform-origin:center top;">ENG</span>
<span class="t " style="left:1570.19px;top:1037px;font-size:17px;line-height:40px;color:#1b1b1b;font-family:'Liberation Sans',sans-serif;transform:scaleX(0.9104);transform-origin:center top;">US</span>
<svg style="left:1627px;top:1034px" width="24" height="18" viewBox="0 0 24 18"><path d="M1 6.5 A16 16 0 0 1 23 6.5 M4.5 10 A11 11 0 0 1 19.5 10 M8 13.5 A6 6 0 0 1 16 13.5" fill="none" stroke="#1b1b1b" stroke-width="1.7"/><circle cx="12" cy="16" r="1.7" fill="#1b1b1b"/></svg>
<svg style="left:1662px;top:1033px" width="26" height="21" viewBox="0 0 26 21"><path d="M1.5 7 H5.5 L11 2 V19 L5.5 14 H1.5 Z" fill="none" stroke="#1b1b1b" stroke-width="1.6" stroke-linejoin="round"/><path d="M15 7 A5 5 0 0 1 15 14 M18.5 4 A9 9 0 0 1 18.5 17 M22 1.5 A13 13 0 0 1 22 19.5" fill="none" stroke="#1b1b1b" stroke-width="1.6"/></svg>
<span class="t " style="left:1730.69px;top:1013px;font-size:17px;line-height:40px;color:#1b1b1b;font-family:'Liberation Sans',sans-serif;transform:scaleX(1.0267);transform-origin:right top;">8:46 PM</span>
<span class="t " style="left:1718.37px;top:1037px;font-size:17px;line-height:40px;color:#1b1b1b;font-family:'Liberation Sans',sans-serif;transform:scaleX(1.0908);transform-origin:right top;">2/25/2024</span>
<svg style="left:1807px;top:1031px" width="24" height="27" viewBox="0 0 24 27"><path d="M1.5 20 C4 18 4.5 14.5 4.5 10.5 C4.5 5 7.5 2.5 11 2.5 C14.5 2.5 17.5 5 17.5 10.5 C17.5 14.5 18 18 20.5 20 Z" fill="#1b1b1b"/><path d="M7.5 22 Q11 26.5 14.5 22 Z" fill="#1b1b1b"/><path d="M6.5 9.5 H11.5 L7 15.5 H12" fill="none" stroke="#e2ddd7" stroke-width="1.8" stroke-linejoin="round"/><path d="M13.5 2 H18.5 L14 7.5 H19" fill="none" stroke="#e2ddd7" stroke-width="4" stroke-linejoin="round"/><path d="M13.5 2 H18.5 L14 7.5 H19" fill="none" stroke="#1b1b1b" stroke-width="1.7" stroke-linejoin="round"/></svg>
<svg style="left:1852px;top:1026px" width="40" height="38" viewBox="0 0 40 38"><defs><linearGradient id="cpa" x1="0" y1="0" x2="0" y2="1"><stop offset="0" stop-color="#1b9ff0"/><stop offset="0.55" stop-color="#5cc257"/><stop offset="1" stop-color="#dcc21a"/></linearGradient><linearGradient id="cpb" x1="0" y1="1" x2="1" y2="0"><stop offset="0" stop-color="#ff6a5a"/><stop offset="0.45" stop-color="#ef4a96"/><stop offset="1" stop-color="#a44ee6"/></linearGradient></defs>
<path d="M22 3 H27 Q30 3 31 6 L33 12 H24 Z" fill="#1c4fd2"/>
<path d="M9 6 Q10 2.5 14 2.5 H25 Q22 3 21 7 L16 24 Q15 26 12 26 H6.5 Q3.5 26 4.5 22.5 Z" fill="url(#cpa)"/>
<path d="M21.5 12 H33 Q37 12 36 16 L33.5 23 Q32.5 26 29 26 H17 Q19.5 26 20.5 22 Z" fill="url(#cpb)"/>
<path d="M20.5 12.5 H22.5 L18.5 25.5 H16.5 Z" fill="#fff" opacity="0.85"/>
<rect x="11.5" y="26" width="27" height="10" rx="2.2" fill="#f8c80e"/><text x="25" y="34.6" text-anchor="middle" font-family="Liberation Sans" font-weight="bold" font-size="9.5" letter-spacing="0.6" fill="#1b1b1b">PRE</text></svg>
</body></html>
